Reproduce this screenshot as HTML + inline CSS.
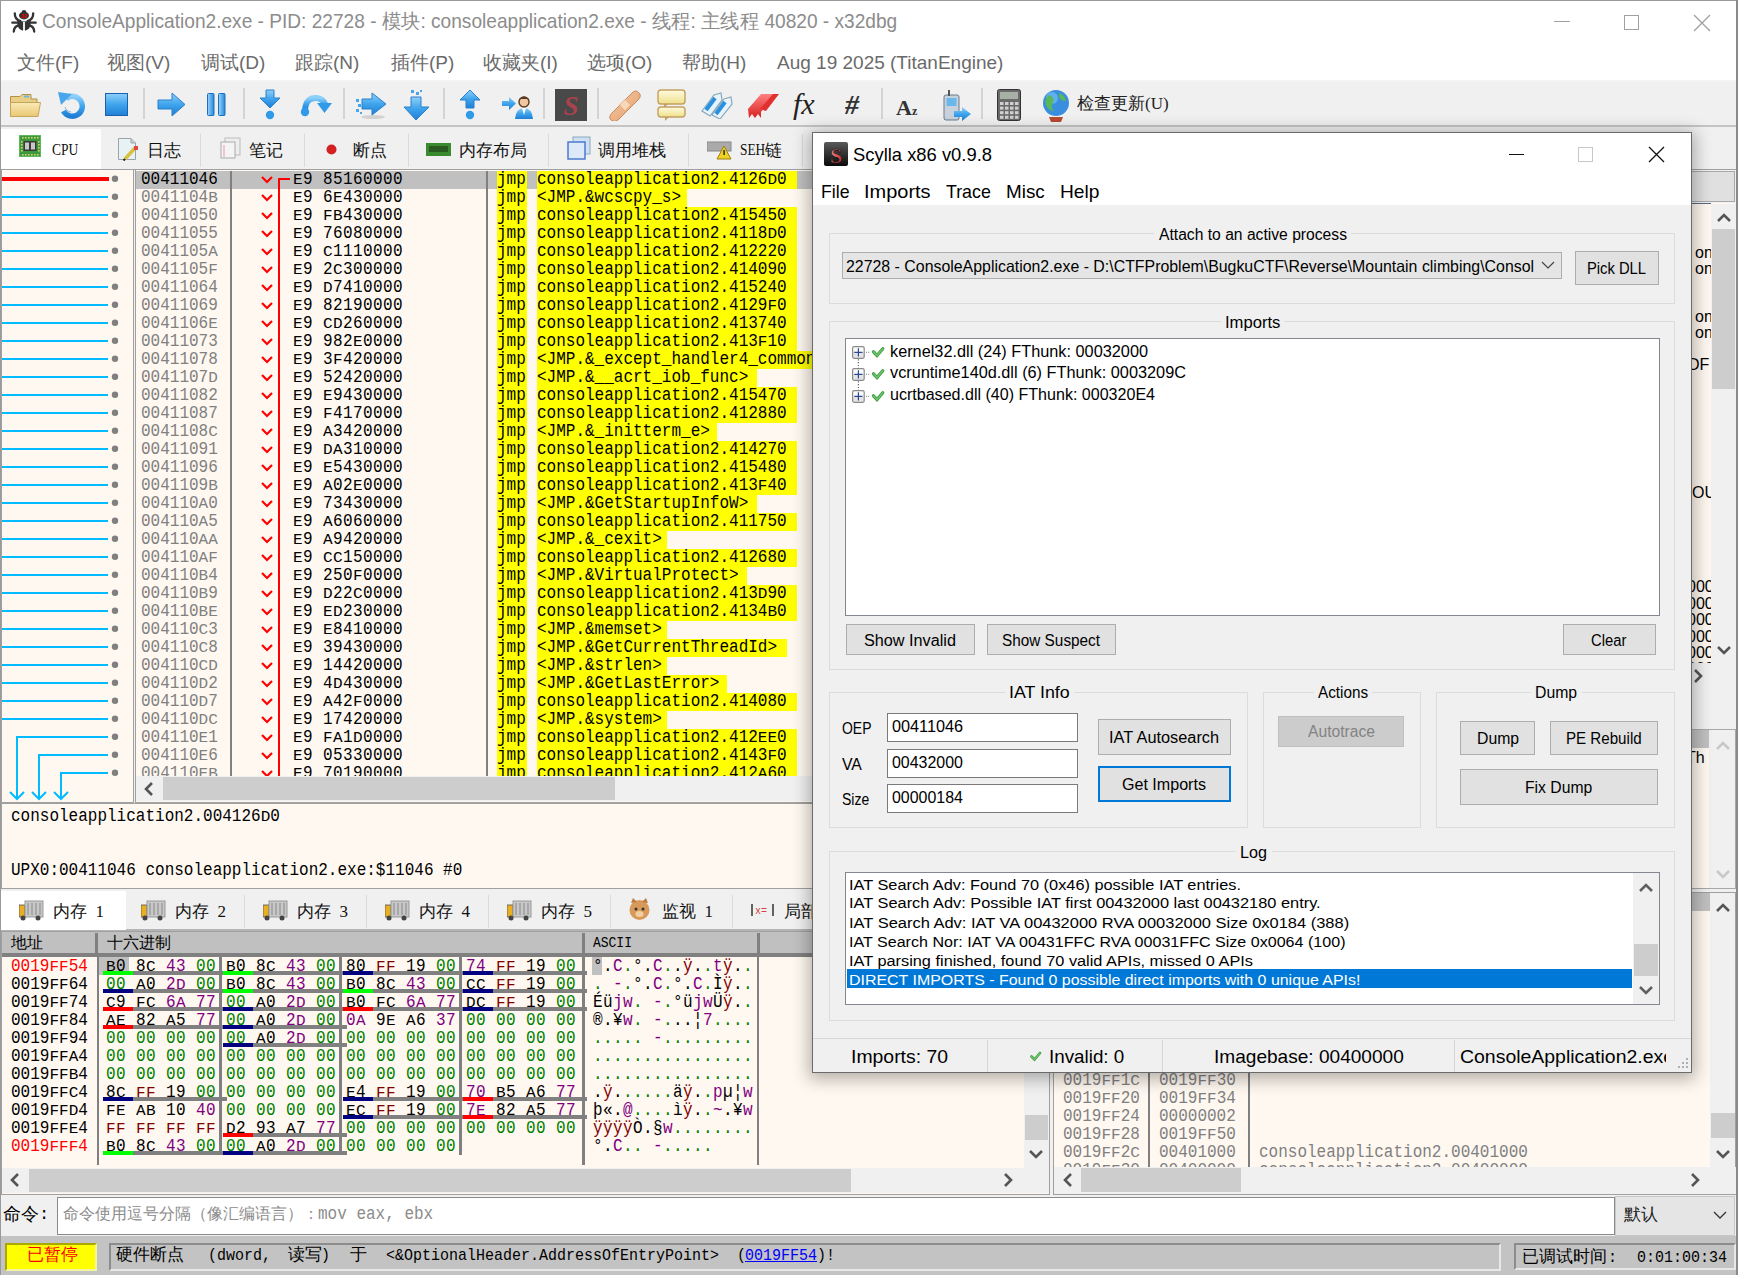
<!DOCTYPE html><html><head><meta charset="utf-8"><style>
html,body{margin:0;padding:0;}
body{width:1738px;height:1275px;overflow:hidden;position:relative;background:#f0f0f0;font-family:"Liberation Sans",sans-serif;}
div,span,svg{position:absolute;box-sizing:border-box;}
span{white-space:pre;line-height:1;}
.m{font-family:"Liberation Mono",monospace;font-size:18.5px;transform:scaleX(0.8649);transform-origin:0 0;}
i{font-style:normal;display:inline-block;position:static;transform:scaleY(.79);transform-origin:0 13px;}
.s{font-family:"Liberation Sans",sans-serif;}
.sf{font-family:"Liberation Serif",serif;}
</style></head><body>

<div style="left:0px;top:0px;width:1738px;height:82px;background:#fff;"></div>
<div style="left:0px;top:0px;width:1738px;height:1px;background:#9a9a9a;"></div>
<div style="left:0px;top:0px;width:1px;height:1275px;background:#9a9a9a;"></div>
<div style="left:1736px;top:0px;width:2px;height:1275px;background:#8a8a8a;"></div>
<svg style="left:8px;top:6px" width="32" height="30" viewBox="0 0 32 30"><g stroke="#333" stroke-width="2.3" fill="none" stroke-linecap="round"><path d="M6.8 7.3 Q6.6 13.5 12.5 15.2"/><path d="M25.2 7.3 Q25.4 13.5 19.5 15.2"/><path d="M4.3 16.7 H9.5"/><path d="M22.5 16.7 H27.7"/><path d="M9.8 19.6 Q6 21 5.8 25.5"/><path d="M22.2 19.6 Q26 21 26.2 25.5"/></g><path d="M9.4 14.2 Q16 16.6 22.6 14.2 L22.6 18 Q22.3 23.6 16 25 Q9.7 23.6 9.4 18 Z" fill="#333"/><rect x="15.1" y="16" width="1.8" height="9.5" fill="#fff"/><ellipse cx="16" cy="9.6" rx="5" ry="3.9" fill="#333"/><ellipse cx="16" cy="5.6" rx="2.3" ry="1.6" fill="#333"/><text x="16" y="11.8" font-family="Liberation Sans" font-weight="bold" font-size="5.6" fill="#e00" text-anchor="middle">32</text></svg>
<span style="left:41.5px;top:12px;font-size:19.8px;color:#8c8c8c;transform:scaleX(0.9657);transform-origin:0 0;">ConsoleApplication2.exe - PID: 22728 - 模块: consoleapplication2.exe - 线程: 主线程 40820 - x32dbg</span>
<div style="left:1554px;top:21px;width:16px;height:1px;background:#a0a0a0;"></div>
<div style="left:1624px;top:15px;width:15px;height:15px;border:1px solid #a0a0a0;"></div>
<svg style="left:1693px;top:14px" width="18" height="18" viewBox="0 0 18 18"><path d="M1 1L17 17M17 1L1 17" stroke="#a0a0a0" stroke-width="1.3"/></svg>
<span style="left:17px;top:53px;font-size:19px;color:#6a6a6a;">文件(F)</span>
<span style="left:107px;top:53px;font-size:19px;color:#6a6a6a;">视图(V)</span>
<span style="left:201px;top:53px;font-size:19px;color:#6a6a6a;">调试(D)</span>
<span style="left:295px;top:53px;font-size:19px;color:#6a6a6a;">跟踪(N)</span>
<span style="left:391px;top:53px;font-size:19px;color:#6a6a6a;">插件(P)</span>
<span style="left:483px;top:53px;font-size:19px;color:#6a6a6a;">收藏夹(I)</span>
<span style="left:587px;top:53px;font-size:19px;color:#6a6a6a;">选项(O)</span>
<span style="left:682px;top:53px;font-size:19px;color:#6a6a6a;">帮助(H)</span>
<span style="left:777px;top:53px;font-size:19px;color:#6a6a6a;">Aug 19 2025 (TitanEngine)</span>
<div style="left:1px;top:80px;width:1735px;height:2px;background:#f4f4f4;"></div>
<div style="left:1px;top:82px;width:1735px;height:45px;background:#f0f0f0;"></div>
<div style="left:1px;top:125px;width:1735px;height:2px;background:#c4c4c4;"></div>
<div style="left:143px;top:88px;width:2px;height:31px;background:#d4d4d4;"></div>
<div style="left:243px;top:88px;width:2px;height:31px;background:#d4d4d4;"></div>
<div style="left:343px;top:88px;width:2px;height:31px;background:#d4d4d4;"></div>
<div style="left:443px;top:88px;width:2px;height:31px;background:#d4d4d4;"></div>
<div style="left:543px;top:88px;width:2px;height:31px;background:#d4d4d4;"></div>
<div style="left:597px;top:88px;width:2px;height:31px;background:#d4d4d4;"></div>
<div style="left:881px;top:88px;width:2px;height:31px;background:#d4d4d4;"></div>
<div style="left:981px;top:88px;width:2px;height:31px;background:#d4d4d4;"></div>
<svg style="left:0;top:0" width="0" height="0"><defs><linearGradient id="gb" x1="0" y1="0" x2="0" y2="1"><stop offset="0" stop-color="#8fd0fa"/><stop offset="0.5" stop-color="#3fa4ec"/><stop offset="1" stop-color="#1f7fd6"/></linearGradient><linearGradient id="gbh" x1="0" y1="0" x2="1" y2="0"><stop offset="0" stop-color="#9ad6fb"/><stop offset="1" stop-color="#2686dc"/></linearGradient><linearGradient id="gf" x1="0" y1="0" x2="0" y2="1"><stop offset="0" stop-color="#fbeab8"/><stop offset="1" stop-color="#e8c873"/></linearGradient><linearGradient id="gbd" x1="0" y1="0" x2="1" y2="1"><stop offset="0" stop-color="#f6cfa8"/><stop offset="1" stop-color="#e29a68"/></linearGradient><linearGradient id="gc" x1="0" y1="0" x2="0" y2="1"><stop offset="0" stop-color="#fffbe0"/><stop offset="1" stop-color="#efe08a"/></linearGradient><linearGradient id="gr" x1="0" y1="0" x2="0" y2="1"><stop offset="0" stop-color="#ff8080"/><stop offset="1" stop-color="#d82020"/></linearGradient></defs></svg>
<svg style="left:9px;top:93px" width="33" height="25" viewBox="0 0 33 25"><path d="M1.5 3.5 H11 L13 1.5 H22 V6 H28 V23.5 H1.5 Z" fill="#e9cf86" stroke="#b49048" stroke-width="1"/><rect x="15" y="2.5" width="5" height="2" fill="#6ab8e8"/><path d="M1.5 9.5 H31.5 L29 23.5 H1.5 Z" fill="url(#gf)" stroke="#c6a458" stroke-width="1"/></svg>
<svg style="left:57px;top:91px" width="29" height="29" viewBox="0 0 29 29"><path d="M9 7.5 A10 10 0 1 1 6.5 20" fill="none" stroke="url(#gb)" stroke-width="5.5"/><path d="M8 16 A7 7 0 0 0 14 21" fill="none" stroke="#1f6fc0" stroke-width="1" opacity=".5"/><path d="M1 1 L15 3 L4 14 Z" fill="#4aa6ec"/></svg>
<svg style="left:105px;top:93px" width="23" height="23" viewBox="0 0 23 23"><rect x="0.5" y="0.5" width="22" height="22" fill="url(#gb)" stroke="#1a62b0"/></svg>
<svg style="left:157px;top:91px" width="29" height="27" viewBox="0 0 29 27"><path d="M1 9 H15 V2 L28 13.5 L15 25 V18 H1 Z" fill="url(#gb)" stroke="#2a80cc" stroke-width="1"/></svg>
<svg style="left:207px;top:93px" width="19" height="23" viewBox="0 0 19 23"><rect x="0.5" y="0.5" width="6.5" height="22" rx="1" fill="url(#gbh)" stroke="#1a6fc0"/><rect x="11.5" y="0.5" width="6.5" height="22" rx="1" fill="url(#gbh)" stroke="#1a6fc0"/></svg>
<svg style="left:259px;top:89px" width="23" height="32" viewBox="0 0 23 32"><path d="M7 1 H15 V9 H21 L11 19 L1 9 H7 Z" fill="url(#gb)" stroke="#2a80cc" stroke-width="1"/><circle cx="11" cy="26" r="4.2" fill="#2f9be8"/></svg>
<svg style="left:300px;top:91px" width="33" height="27" viewBox="0 0 33 27"><path d="M5 19 Q6 6 17 7 Q23 8 25 13" fill="none" stroke="url(#gb)" stroke-width="6"/><path d="M17 12 H32 L24.5 22 Z" fill="#2f9be8"/><circle cx="5" cy="21" r="4.2" fill="#2f9be8"/></svg>
<svg style="left:355px;top:91px" width="32" height="30" viewBox="0 0 32 30"><ellipse cx="18" cy="26" rx="12" ry="2" fill="#000" opacity=".12"/><path d="M7 8 H17 V2 L31 13 L17 24 V18 H7 Z" fill="url(#gb)" stroke="#2a80cc" stroke-width="1"/><rect x="1" y="8" width="3" height="3" fill="#4aa6ea"/><rect x="3" y="13" width="3" height="3" fill="#4aa6ea"/><rect x="1" y="18" width="3" height="3" fill="#4aa6ea"/><rect x="5" y="21" width="2" height="2" fill="#4aa6ea"/></svg>
<svg style="left:403px;top:89px" width="27" height="33" viewBox="0 0 27 33"><path d="M8 8 H18 V18 H26 L13 31 L1 18 H8 Z" fill="url(#gb)" stroke="#2a80cc" stroke-width="1"/><rect x="8" y="1" width="3" height="3" fill="#4aa6ea"/><rect x="13" y="3" width="3" height="3" fill="#4aa6ea"/><rect x="17" y="1" width="2" height="2" fill="#4aa6ea"/></svg>
<svg style="left:459px;top:89px" width="22" height="32" viewBox="0 0 22 32"><path d="M11 1 L21 11 H15 V19 H7 V11 H1 Z" fill="url(#gb)" stroke="#2a80cc" stroke-width="1"/><circle cx="11" cy="26" r="4.2" fill="#2f9be8"/></svg>
<svg style="left:501px;top:94px" width="33" height="26" viewBox="0 0 33 26"><path d="M1 7 H8 V3 L15 9.5 L8 16 V12 H1 Z" fill="url(#gb)"/><circle cx="23" cy="8" r="5" fill="#efc8a0" stroke="#5a3a20" stroke-width="1.4"/><path d="M18 5 Q23 0 28 5" fill="#5a3a20"/><path d="M14 25 Q15 14 23 14 Q31 14 32 25 Z" fill="url(#gb)"/><path d="M21 14 L23 21 L25 14" fill="#fff"/></svg>
<svg style="left:555px;top:89px" width="32" height="32" viewBox="0 0 32 32"><rect x="0" y="0" width="32" height="32" fill="#494949"/><text x="16" y="26" font-family="Liberation Serif" font-weight="bold" font-size="27" fill="#a8424c" text-anchor="middle" font-style="italic">S</text></svg>
<svg style="left:608px;top:89px" width="34" height="32" viewBox="0 0 34 32"><path d="M4 24 L24 4 Q28 0 31 4 Q34 7 30 11 L10 31 Q6 34 3 31 Q0 28 4 24 Z" fill="url(#gbd)" stroke="#c98a5a" stroke-width="1"/><rect x="13" y="12" width="8" height="8" transform="rotate(-45 17 16)" fill="#f8d8b8" stroke="#e0a070" stroke-width=".6"/></svg>
<svg style="left:657px;top:89px" width="29" height="32" viewBox="0 0 29 32"><rect x="1" y="1" width="27" height="14" rx="3" fill="url(#gc)" stroke="#c4a060" stroke-width="1.4"/><path d="M7 15 V19 L11 15" fill="#c4a060"/><rect x="1" y="18" width="27" height="10" rx="3" fill="url(#gc)" stroke="#c4a060" stroke-width="1.4"/><path d="M8 28 V32 L12 28" fill="#c4a060"/></svg>
<svg style="left:700px;top:91px" width="34" height="28" viewBox="0 0 34 28"><path d="M2 20 L14 4 L21 2 L22 9 L10 25 Z" fill="#e8f4fb" stroke="#88a8b8" stroke-width="1.2"/><path d="M6 19 L15 7" stroke="#2a90e0" stroke-width="4"/><path d="M12 24 L24 8 L31 6 L32 13 L20 28 Z" fill="#e8f4fb" stroke="#88a8b8" stroke-width="1.2"/><path d="M16 23 L25 11" stroke="#2a90e0" stroke-width="4"/></svg>
<svg style="left:747px;top:91px" width="33" height="28" viewBox="0 0 33 28"><path d="M1 18 L14 3 H21 L8 21 V27 L5 23 L2 27 Z" fill="url(#gr)"/><path d="M7 18 L20 3 H27 L14 21 V27 L11 23 L8 27 Z" fill="url(#gr)"/><path d="M13 18 L26 3 H32 L19 20 Z" fill="#e03030"/></svg>
<svg style="left:793px;top:89px" width="31" height="32" viewBox="0 0 31 32"><text x="0" y="25" font-family="Liberation Serif" font-style="italic" font-size="30" fill="#222">fx</text></svg>
<svg style="left:845px;top:91px" width="22" height="28" viewBox="0 0 22 28"><text x="0" y="23" font-family="Liberation Serif" font-style="italic" font-weight="bold" font-size="28" fill="#333">#</text></svg>
<svg style="left:896px;top:93px" width="28" height="26" viewBox="0 0 28 26"><text x="0" y="22" font-family="Liberation Serif" font-weight="bold" font-size="22" fill="#333">A</text><text x="16" y="22" font-family="Liberation Serif" font-weight="bold" font-size="12" fill="#333">z</text></svg>
<svg style="left:941px;top:89px" width="31" height="33" viewBox="0 0 31 33"><rect x="3" y="6" width="15" height="25" rx="2" fill="#c8d2dc" stroke="#6a7a8a"/><rect x="5.5" y="9" width="10" height="8" fill="#6ab8ea"/><rect x="7" y="1" width="2" height="6" fill="#555"/><path d="M13 22 H21 V18 L30 25 L21 32 V28 H13 Z" fill="url(#gb)"/></svg>
<svg style="left:997px;top:89px" width="24" height="32" viewBox="0 0 24 32"><rect x="0.5" y="0.5" width="23" height="31" rx="2" fill="#6a6a6a" stroke="#333"/><rect x="3" y="3" width="18" height="7" fill="#a8b0a8"/><rect x="3" y="13.0" width="3.5" height="3" fill="#d0d0d0"/><rect x="8" y="13.0" width="3.5" height="3" fill="#d0d0d0"/><rect x="13" y="13.0" width="3.5" height="3" fill="#d0d0d0"/><rect x="18" y="13.0" width="3.5" height="3" fill="#d0d0d0"/><rect x="3" y="17.6" width="3.5" height="3" fill="#d0d0d0"/><rect x="8" y="17.6" width="3.5" height="3" fill="#d0d0d0"/><rect x="13" y="17.6" width="3.5" height="3" fill="#d0d0d0"/><rect x="18" y="17.6" width="3.5" height="3" fill="#d0d0d0"/><rect x="3" y="22.2" width="3.5" height="3" fill="#d0d0d0"/><rect x="8" y="22.2" width="3.5" height="3" fill="#d0d0d0"/><rect x="13" y="22.2" width="3.5" height="3" fill="#d0d0d0"/><rect x="18" y="22.2" width="3.5" height="3" fill="#d0d0d0"/><rect x="3" y="26.799999999999997" width="3.5" height="3" fill="#d0d0d0"/><rect x="8" y="26.799999999999997" width="3.5" height="3" fill="#d0d0d0"/><rect x="13" y="26.799999999999997" width="3.5" height="3" fill="#d0d0d0"/><rect x="18" y="26.799999999999997" width="3.5" height="3" fill="#d0d0d0"/></svg>
<svg style="left:1041px;top:89px" width="30" height="34" viewBox="0 0 30 34"><circle cx="15" cy="14" r="13" fill="#3a8ee0"/><circle cx="11" cy="9" r="6" fill="#8ad0ff" opacity=".5"/><path d="M8 6 Q14 8 12 14 Q9 18 13 22 Q8 22 5 16 Q3 10 8 6Z" fill="#58b858"/><path d="M18 4 Q24 6 25 12 Q20 12 18 8Z" fill="#58b858"/><path d="M8 28 H22 L20 33 H10 Z" fill="#b84a30"/></svg>
<span style="left:1077px;top:95px;font-size:17px;color:#222;font-family:'Liberation Serif',serif;">检查更新(U)</span>
<div style="left:1px;top:127px;width:1735px;height:43px;background:#f0f0f0;"></div>
<div style="left:1px;top:169px;width:1735px;height:1px;background:#a0a0a0;"></div>
<div style="left:1px;top:129px;width:100px;height:40px;background:#fff;"></div>
<div style="left:200px;top:134px;width:1px;height:33px;background:#dadada;"></div>
<div style="left:304px;top:134px;width:1px;height:33px;background:#dadada;"></div>
<div style="left:408px;top:134px;width:1px;height:33px;background:#dadada;"></div>
<div style="left:548px;top:134px;width:1px;height:33px;background:#dadada;"></div>
<div style="left:688px;top:134px;width:1px;height:33px;background:#dadada;"></div>
<div style="left:802px;top:134px;width:1px;height:33px;background:#dadada;"></div>
<span style="left:147px;top:142px;font-size:17px;color:#111;">日志</span>
<span style="left:249px;top:142px;font-size:17px;color:#111;">笔记</span>
<span style="left:353px;top:142px;font-size:17px;color:#111;">断点</span>
<span style="left:459px;top:142px;font-size:17px;color:#111;">内存布局</span>
<span style="left:598px;top:142px;font-size:17px;color:#111;">调用堆栈</span>
<span style="left:765px;top:142px;font-size:17px;color:#111;">链</span>
<span style="left:51.50px;top:141px;font-family:'Liberation Serif',serif;font-size:17px;color:#111;transform:scaleX(0.7940);transform-origin:0 0;">CPU</span>
<span style="left:740.00px;top:141px;font-family:'Liberation Serif',serif;font-size:17px;color:#111;transform:scaleX(0.7844);transform-origin:0 0;">SEH</span>
<svg style="left:19px;top:135px" width="23" height="23" viewBox="0 0 23 23"><rect x="0" y="0" width="22" height="22" fill="#3c9a3c"/><rect x="0.5" y="0.5" width="21" height="21" fill="none" stroke="#5cb85c"/><rect x="3" y="2" width="1.6" height="1.6" fill="#d8d070"/><rect x="3" y="19" width="1.6" height="1.6" fill="#d8d070"/><rect x="6" y="2" width="1.6" height="1.6" fill="#d8d070"/><rect x="6" y="19" width="1.6" height="1.6" fill="#d8d070"/><rect x="9" y="2" width="1.6" height="1.6" fill="#d8d070"/><rect x="9" y="19" width="1.6" height="1.6" fill="#d8d070"/><rect x="12" y="2" width="1.6" height="1.6" fill="#d8d070"/><rect x="12" y="19" width="1.6" height="1.6" fill="#d8d070"/><rect x="15" y="2" width="1.6" height="1.6" fill="#d8d070"/><rect x="15" y="19" width="1.6" height="1.6" fill="#d8d070"/><rect x="18" y="2" width="1.6" height="1.6" fill="#d8d070"/><rect x="18" y="19" width="1.6" height="1.6" fill="#d8d070"/><rect x="2" y="6" width="1.6" height="1.6" fill="#d8d070"/><rect x="19" y="6" width="1.6" height="1.6" fill="#d8d070"/><rect x="2" y="9" width="1.6" height="1.6" fill="#d8d070"/><rect x="19" y="9" width="1.6" height="1.6" fill="#d8d070"/><rect x="2" y="12" width="1.6" height="1.6" fill="#d8d070"/><rect x="19" y="12" width="1.6" height="1.6" fill="#d8d070"/><rect x="2" y="15" width="1.6" height="1.6" fill="#d8d070"/><rect x="19" y="15" width="1.6" height="1.6" fill="#d8d070"/><rect x="4.5" y="6" width="13" height="10" fill="#3a3a3a"/><rect x="6" y="7.5" width="4" height="7" fill="#c8c8c8"/><rect x="12" y="7.5" width="4" height="7" fill="#c8c8c8"/></svg>
<svg style="left:117px;top:137px" width="22" height="24" viewBox="0 0 22 24"><path d="M1.5 1.5 H14 L18.5 6 V22.5 H1.5 Z" fill="#e8f2f4" stroke="#9aa4a8"/><path d="M14 1.5 V6 H18.5" fill="#c8d0d4" stroke="#9aa4a8"/><path d="M8 22 L18 11" stroke="#d8c040" stroke-width="3.5"/><path d="M8 22 L6.5 23.5" stroke="#222" stroke-width="2"/><rect x="17" y="9" width="4" height="4" fill="#e04848"/></svg>
<svg style="left:219px;top:137px" width="23" height="22" viewBox="0 0 23 22"><rect x="6" y="1" width="15" height="17" fill="#eee" stroke="#bbb"/><rect x="2" y="5" width="14" height="16" fill="#f4f4f4" stroke="#aaa"/><path d="M5 8 V20" stroke="#e9a" stroke-width="1"/></svg>
<svg style="left:326px;top:144px" width="11" height="11" viewBox="0 0 11 11"><circle cx="5.5" cy="5.5" r="5" fill="#d42020"/></svg>
<svg style="left:426px;top:143px" width="25" height="13" viewBox="0 0 25 13"><rect x="0" y="0" width="25" height="13" fill="#3a8a30"/><rect x="3" y="3" width="19" height="6" fill="#2a5a20"/></svg>
<svg style="left:567px;top:136px" width="24" height="24" viewBox="0 0 24 24"><rect x="6" y="1" width="17" height="17" fill="#cfe0f4" stroke="#8ab"/><rect x="1" y="6" width="17" height="17" fill="#dde9f8" stroke="#4a7ad0" stroke-width="1.5"/></svg>
<svg style="left:707px;top:138px" width="25" height="22" viewBox="0 0 25 22"><rect x="0" y="4" width="24" height="9" fill="#aaa" stroke="#888"/><path d="M17 8 L24 21 H10 Z" fill="#f0d020" stroke="#a08010"/><rect x="16.3" y="12" width="1.6" height="5" fill="#333"/></svg>
<div style="left:1px;top:169px;width:133px;height:634px;background:#FFF8F0;border:1px solid #a0a0a0;"></div>
<div style="left:135px;top:169px;width:1601px;height:634px;background:#FFF8F0;border:1px solid #a0a0a0;border-right:none;"></div>
<div style="left:136px;top:171px;width:1560px;height:18px;background:#c0c0c0;"></div>
<div style="left:230px;top:171px;width:2px;height:605px;background:#808080;"></div>
<div style="left:486px;top:171px;width:2px;height:605px;background:#808080;"></div>
<span class="m" style="left:141px;top:171px;color:#000;">00411046</span>
<span class="m" style="left:293px;top:171px;color:#000;letter-spacing:0.46px;"><i>E</i>9</span>
<span class="m" style="left:323px;top:171px;color:#000;letter-spacing:0.46px;">85160000</span>
<div style="left:497px;top:171px;width:30px;height:18px;background:#ffff00;"></div>
<div style="left:537px;top:171px;width:260px;height:18px;background:#ffff00;"></div>
<span class="m" style="left:497px;top:171px;color:#000;">jmp</span>
<span class="m" style="left:537px;top:171px;color:#000;">consoleapplication2.4126<i>D</i>0</span>
<span class="m" style="left:141px;top:189px;color:#808080;">0041104<i>B</i></span>
<span class="m" style="left:293px;top:189px;color:#000;letter-spacing:0.46px;"><i>E</i>9</span>
<span class="m" style="left:323px;top:189px;color:#000;letter-spacing:0.46px;">6<i>E</i>430000</span>
<div style="left:497px;top:189px;width:30px;height:18px;background:#ffff00;"></div>
<div style="left:537px;top:189px;width:150px;height:18px;background:#ffff00;"></div>
<span class="m" style="left:497px;top:189px;color:#000;">jmp</span>
<span class="m" style="left:537px;top:189px;color:#000;">&lt;JMP.&amp;wcscpy_s&gt;</span>
<span class="m" style="left:141px;top:207px;color:#808080;">00411050</span>
<span class="m" style="left:293px;top:207px;color:#000;letter-spacing:0.46px;"><i>E</i>9</span>
<span class="m" style="left:323px;top:207px;color:#000;letter-spacing:0.46px;"><i>F</i><i>B</i>430000</span>
<div style="left:497px;top:207px;width:30px;height:18px;background:#ffff00;"></div>
<div style="left:537px;top:207px;width:260px;height:18px;background:#ffff00;"></div>
<span class="m" style="left:497px;top:207px;color:#000;">jmp</span>
<span class="m" style="left:537px;top:207px;color:#000;">consoleapplication2.415450</span>
<span class="m" style="left:141px;top:225px;color:#808080;">00411055</span>
<span class="m" style="left:293px;top:225px;color:#000;letter-spacing:0.46px;"><i>E</i>9</span>
<span class="m" style="left:323px;top:225px;color:#000;letter-spacing:0.46px;">76080000</span>
<div style="left:497px;top:225px;width:30px;height:18px;background:#ffff00;"></div>
<div style="left:537px;top:225px;width:260px;height:18px;background:#ffff00;"></div>
<span class="m" style="left:497px;top:225px;color:#000;">jmp</span>
<span class="m" style="left:537px;top:225px;color:#000;">consoleapplication2.4118<i>D</i>0</span>
<span class="m" style="left:141px;top:243px;color:#808080;">0041105<i>A</i></span>
<span class="m" style="left:293px;top:243px;color:#000;letter-spacing:0.46px;"><i>E</i>9</span>
<span class="m" style="left:323px;top:243px;color:#000;letter-spacing:0.46px;"><i>C</i>1110000</span>
<div style="left:497px;top:243px;width:30px;height:18px;background:#ffff00;"></div>
<div style="left:537px;top:243px;width:260px;height:18px;background:#ffff00;"></div>
<span class="m" style="left:497px;top:243px;color:#000;">jmp</span>
<span class="m" style="left:537px;top:243px;color:#000;">consoleapplication2.412220</span>
<span class="m" style="left:141px;top:261px;color:#808080;">0041105<i>F</i></span>
<span class="m" style="left:293px;top:261px;color:#000;letter-spacing:0.46px;"><i>E</i>9</span>
<span class="m" style="left:323px;top:261px;color:#000;letter-spacing:0.46px;">2<i>C</i>300000</span>
<div style="left:497px;top:261px;width:30px;height:18px;background:#ffff00;"></div>
<div style="left:537px;top:261px;width:260px;height:18px;background:#ffff00;"></div>
<span class="m" style="left:497px;top:261px;color:#000;">jmp</span>
<span class="m" style="left:537px;top:261px;color:#000;">consoleapplication2.414090</span>
<span class="m" style="left:141px;top:279px;color:#808080;">00411064</span>
<span class="m" style="left:293px;top:279px;color:#000;letter-spacing:0.46px;"><i>E</i>9</span>
<span class="m" style="left:323px;top:279px;color:#000;letter-spacing:0.46px;"><i>D</i>7410000</span>
<div style="left:497px;top:279px;width:30px;height:18px;background:#ffff00;"></div>
<div style="left:537px;top:279px;width:260px;height:18px;background:#ffff00;"></div>
<span class="m" style="left:497px;top:279px;color:#000;">jmp</span>
<span class="m" style="left:537px;top:279px;color:#000;">consoleapplication2.415240</span>
<span class="m" style="left:141px;top:297px;color:#808080;">00411069</span>
<span class="m" style="left:293px;top:297px;color:#000;letter-spacing:0.46px;"><i>E</i>9</span>
<span class="m" style="left:323px;top:297px;color:#000;letter-spacing:0.46px;">82190000</span>
<div style="left:497px;top:297px;width:30px;height:18px;background:#ffff00;"></div>
<div style="left:537px;top:297px;width:260px;height:18px;background:#ffff00;"></div>
<span class="m" style="left:497px;top:297px;color:#000;">jmp</span>
<span class="m" style="left:537px;top:297px;color:#000;">consoleapplication2.4129<i>F</i>0</span>
<span class="m" style="left:141px;top:315px;color:#808080;">0041106<i>E</i></span>
<span class="m" style="left:293px;top:315px;color:#000;letter-spacing:0.46px;"><i>E</i>9</span>
<span class="m" style="left:323px;top:315px;color:#000;letter-spacing:0.46px;"><i>C</i><i>D</i>260000</span>
<div style="left:497px;top:315px;width:30px;height:18px;background:#ffff00;"></div>
<div style="left:537px;top:315px;width:260px;height:18px;background:#ffff00;"></div>
<span class="m" style="left:497px;top:315px;color:#000;">jmp</span>
<span class="m" style="left:537px;top:315px;color:#000;">consoleapplication2.413740</span>
<span class="m" style="left:141px;top:333px;color:#808080;">00411073</span>
<span class="m" style="left:293px;top:333px;color:#000;letter-spacing:0.46px;"><i>E</i>9</span>
<span class="m" style="left:323px;top:333px;color:#000;letter-spacing:0.46px;">982<i>E</i>0000</span>
<div style="left:497px;top:333px;width:30px;height:18px;background:#ffff00;"></div>
<div style="left:537px;top:333px;width:260px;height:18px;background:#ffff00;"></div>
<span class="m" style="left:497px;top:333px;color:#000;">jmp</span>
<span class="m" style="left:537px;top:333px;color:#000;">consoleapplication2.413<i>F</i>10</span>
<span class="m" style="left:141px;top:351px;color:#808080;">00411078</span>
<span class="m" style="left:293px;top:351px;color:#000;letter-spacing:0.46px;"><i>E</i>9</span>
<span class="m" style="left:323px;top:351px;color:#000;letter-spacing:0.46px;">3<i>F</i>420000</span>
<div style="left:497px;top:351px;width:30px;height:18px;background:#ffff00;"></div>
<div style="left:537px;top:351px;width:300px;height:18px;background:#ffff00;"></div>
<span class="m" style="left:497px;top:351px;color:#000;">jmp</span>
<span class="m" style="left:537px;top:351px;color:#000;">&lt;JMP.&amp;_except_handler4_common&gt;</span>
<span class="m" style="left:141px;top:369px;color:#808080;">0041107<i>D</i></span>
<span class="m" style="left:293px;top:369px;color:#000;letter-spacing:0.46px;"><i>E</i>9</span>
<span class="m" style="left:323px;top:369px;color:#000;letter-spacing:0.46px;">52420000</span>
<div style="left:497px;top:369px;width:30px;height:18px;background:#ffff00;"></div>
<div style="left:537px;top:369px;width:220px;height:18px;background:#ffff00;"></div>
<span class="m" style="left:497px;top:369px;color:#000;">jmp</span>
<span class="m" style="left:537px;top:369px;color:#000;">&lt;JMP.&amp;__acrt_iob_func&gt;</span>
<span class="m" style="left:141px;top:387px;color:#808080;">00411082</span>
<span class="m" style="left:293px;top:387px;color:#000;letter-spacing:0.46px;"><i>E</i>9</span>
<span class="m" style="left:323px;top:387px;color:#000;letter-spacing:0.46px;"><i>E</i>9430000</span>
<div style="left:497px;top:387px;width:30px;height:18px;background:#ffff00;"></div>
<div style="left:537px;top:387px;width:260px;height:18px;background:#ffff00;"></div>
<span class="m" style="left:497px;top:387px;color:#000;">jmp</span>
<span class="m" style="left:537px;top:387px;color:#000;">consoleapplication2.415470</span>
<span class="m" style="left:141px;top:405px;color:#808080;">00411087</span>
<span class="m" style="left:293px;top:405px;color:#000;letter-spacing:0.46px;"><i>E</i>9</span>
<span class="m" style="left:323px;top:405px;color:#000;letter-spacing:0.46px;"><i>F</i>4170000</span>
<div style="left:497px;top:405px;width:30px;height:18px;background:#ffff00;"></div>
<div style="left:537px;top:405px;width:260px;height:18px;background:#ffff00;"></div>
<span class="m" style="left:497px;top:405px;color:#000;">jmp</span>
<span class="m" style="left:537px;top:405px;color:#000;">consoleapplication2.412880</span>
<span class="m" style="left:141px;top:423px;color:#808080;">0041108<i>C</i></span>
<span class="m" style="left:293px;top:423px;color:#000;letter-spacing:0.46px;"><i>E</i>9</span>
<span class="m" style="left:323px;top:423px;color:#000;letter-spacing:0.46px;"><i>A</i>3420000</span>
<div style="left:497px;top:423px;width:30px;height:18px;background:#ffff00;"></div>
<div style="left:537px;top:423px;width:180px;height:18px;background:#ffff00;"></div>
<span class="m" style="left:497px;top:423px;color:#000;">jmp</span>
<span class="m" style="left:537px;top:423px;color:#000;">&lt;JMP.&amp;_initterm_e&gt;</span>
<span class="m" style="left:141px;top:441px;color:#808080;">00411091</span>
<span class="m" style="left:293px;top:441px;color:#000;letter-spacing:0.46px;"><i>E</i>9</span>
<span class="m" style="left:323px;top:441px;color:#000;letter-spacing:0.46px;"><i>D</i><i>A</i>310000</span>
<div style="left:497px;top:441px;width:30px;height:18px;background:#ffff00;"></div>
<div style="left:537px;top:441px;width:260px;height:18px;background:#ffff00;"></div>
<span class="m" style="left:497px;top:441px;color:#000;">jmp</span>
<span class="m" style="left:537px;top:441px;color:#000;">consoleapplication2.414270</span>
<span class="m" style="left:141px;top:459px;color:#808080;">00411096</span>
<span class="m" style="left:293px;top:459px;color:#000;letter-spacing:0.46px;"><i>E</i>9</span>
<span class="m" style="left:323px;top:459px;color:#000;letter-spacing:0.46px;"><i>E</i>5430000</span>
<div style="left:497px;top:459px;width:30px;height:18px;background:#ffff00;"></div>
<div style="left:537px;top:459px;width:260px;height:18px;background:#ffff00;"></div>
<span class="m" style="left:497px;top:459px;color:#000;">jmp</span>
<span class="m" style="left:537px;top:459px;color:#000;">consoleapplication2.415480</span>
<span class="m" style="left:141px;top:477px;color:#808080;">0041109<i>B</i></span>
<span class="m" style="left:293px;top:477px;color:#000;letter-spacing:0.46px;"><i>E</i>9</span>
<span class="m" style="left:323px;top:477px;color:#000;letter-spacing:0.46px;"><i>A</i>02<i>E</i>0000</span>
<div style="left:497px;top:477px;width:30px;height:18px;background:#ffff00;"></div>
<div style="left:537px;top:477px;width:260px;height:18px;background:#ffff00;"></div>
<span class="m" style="left:497px;top:477px;color:#000;">jmp</span>
<span class="m" style="left:537px;top:477px;color:#000;">consoleapplication2.413<i>F</i>40</span>
<span class="m" style="left:141px;top:495px;color:#808080;">004110<i>A</i>0</span>
<span class="m" style="left:293px;top:495px;color:#000;letter-spacing:0.46px;"><i>E</i>9</span>
<span class="m" style="left:323px;top:495px;color:#000;letter-spacing:0.46px;">73430000</span>
<div style="left:497px;top:495px;width:30px;height:18px;background:#ffff00;"></div>
<div style="left:537px;top:495px;width:220px;height:18px;background:#ffff00;"></div>
<span class="m" style="left:497px;top:495px;color:#000;">jmp</span>
<span class="m" style="left:537px;top:495px;color:#000;">&lt;JMP.&amp;GetStartupInfoW&gt;</span>
<span class="m" style="left:141px;top:513px;color:#808080;">004110<i>A</i>5</span>
<span class="m" style="left:293px;top:513px;color:#000;letter-spacing:0.46px;"><i>E</i>9</span>
<span class="m" style="left:323px;top:513px;color:#000;letter-spacing:0.46px;"><i>A</i>6060000</span>
<div style="left:497px;top:513px;width:30px;height:18px;background:#ffff00;"></div>
<div style="left:537px;top:513px;width:260px;height:18px;background:#ffff00;"></div>
<span class="m" style="left:497px;top:513px;color:#000;">jmp</span>
<span class="m" style="left:537px;top:513px;color:#000;">consoleapplication2.411750</span>
<span class="m" style="left:141px;top:531px;color:#808080;">004110<i>A</i><i>A</i></span>
<span class="m" style="left:293px;top:531px;color:#000;letter-spacing:0.46px;"><i>E</i>9</span>
<span class="m" style="left:323px;top:531px;color:#000;letter-spacing:0.46px;"><i>A</i>9420000</span>
<div style="left:497px;top:531px;width:30px;height:18px;background:#ffff00;"></div>
<div style="left:537px;top:531px;width:130px;height:18px;background:#ffff00;"></div>
<span class="m" style="left:497px;top:531px;color:#000;">jmp</span>
<span class="m" style="left:537px;top:531px;color:#000;">&lt;JMP.&amp;_cexit&gt;</span>
<span class="m" style="left:141px;top:549px;color:#808080;">004110<i>A</i><i>F</i></span>
<span class="m" style="left:293px;top:549px;color:#000;letter-spacing:0.46px;"><i>E</i>9</span>
<span class="m" style="left:323px;top:549px;color:#000;letter-spacing:0.46px;"><i>C</i><i>C</i>150000</span>
<div style="left:497px;top:549px;width:30px;height:18px;background:#ffff00;"></div>
<div style="left:537px;top:549px;width:260px;height:18px;background:#ffff00;"></div>
<span class="m" style="left:497px;top:549px;color:#000;">jmp</span>
<span class="m" style="left:537px;top:549px;color:#000;">consoleapplication2.412680</span>
<span class="m" style="left:141px;top:567px;color:#808080;">004110<i>B</i>4</span>
<span class="m" style="left:293px;top:567px;color:#000;letter-spacing:0.46px;"><i>E</i>9</span>
<span class="m" style="left:323px;top:567px;color:#000;letter-spacing:0.46px;">250<i>F</i>0000</span>
<div style="left:497px;top:567px;width:30px;height:18px;background:#ffff00;"></div>
<div style="left:537px;top:567px;width:210px;height:18px;background:#ffff00;"></div>
<span class="m" style="left:497px;top:567px;color:#000;">jmp</span>
<span class="m" style="left:537px;top:567px;color:#000;">&lt;JMP.&amp;VirtualProtect&gt;</span>
<span class="m" style="left:141px;top:585px;color:#808080;">004110<i>B</i>9</span>
<span class="m" style="left:293px;top:585px;color:#000;letter-spacing:0.46px;"><i>E</i>9</span>
<span class="m" style="left:323px;top:585px;color:#000;letter-spacing:0.46px;"><i>D</i>22<i>C</i>0000</span>
<div style="left:497px;top:585px;width:30px;height:18px;background:#ffff00;"></div>
<div style="left:537px;top:585px;width:260px;height:18px;background:#ffff00;"></div>
<span class="m" style="left:497px;top:585px;color:#000;">jmp</span>
<span class="m" style="left:537px;top:585px;color:#000;">consoleapplication2.413<i>D</i>90</span>
<span class="m" style="left:141px;top:603px;color:#808080;">004110<i>B</i><i>E</i></span>
<span class="m" style="left:293px;top:603px;color:#000;letter-spacing:0.46px;"><i>E</i>9</span>
<span class="m" style="left:323px;top:603px;color:#000;letter-spacing:0.46px;"><i>E</i><i>D</i>230000</span>
<div style="left:497px;top:603px;width:30px;height:18px;background:#ffff00;"></div>
<div style="left:537px;top:603px;width:260px;height:18px;background:#ffff00;"></div>
<span class="m" style="left:497px;top:603px;color:#000;">jmp</span>
<span class="m" style="left:537px;top:603px;color:#000;">consoleapplication2.4134<i>B</i>0</span>
<span class="m" style="left:141px;top:621px;color:#808080;">004110<i>C</i>3</span>
<span class="m" style="left:293px;top:621px;color:#000;letter-spacing:0.46px;"><i>E</i>9</span>
<span class="m" style="left:323px;top:621px;color:#000;letter-spacing:0.46px;"><i>E</i>8410000</span>
<div style="left:497px;top:621px;width:30px;height:18px;background:#ffff00;"></div>
<div style="left:537px;top:621px;width:130px;height:18px;background:#ffff00;"></div>
<span class="m" style="left:497px;top:621px;color:#000;">jmp</span>
<span class="m" style="left:537px;top:621px;color:#000;">&lt;JMP.&amp;memset&gt;</span>
<span class="m" style="left:141px;top:639px;color:#808080;">004110<i>C</i>8</span>
<span class="m" style="left:293px;top:639px;color:#000;letter-spacing:0.46px;"><i>E</i>9</span>
<span class="m" style="left:323px;top:639px;color:#000;letter-spacing:0.46px;">39430000</span>
<div style="left:497px;top:639px;width:30px;height:18px;background:#ffff00;"></div>
<div style="left:537px;top:639px;width:250px;height:18px;background:#ffff00;"></div>
<span class="m" style="left:497px;top:639px;color:#000;">jmp</span>
<span class="m" style="left:537px;top:639px;color:#000;">&lt;JMP.&amp;GetCurrentThreadId&gt;</span>
<span class="m" style="left:141px;top:657px;color:#808080;">004110<i>C</i><i>D</i></span>
<span class="m" style="left:293px;top:657px;color:#000;letter-spacing:0.46px;"><i>E</i>9</span>
<span class="m" style="left:323px;top:657px;color:#000;letter-spacing:0.46px;">14420000</span>
<div style="left:497px;top:657px;width:30px;height:18px;background:#ffff00;"></div>
<div style="left:537px;top:657px;width:130px;height:18px;background:#ffff00;"></div>
<span class="m" style="left:497px;top:657px;color:#000;">jmp</span>
<span class="m" style="left:537px;top:657px;color:#000;">&lt;JMP.&amp;strlen&gt;</span>
<span class="m" style="left:141px;top:675px;color:#808080;">004110<i>D</i>2</span>
<span class="m" style="left:293px;top:675px;color:#000;letter-spacing:0.46px;"><i>E</i>9</span>
<span class="m" style="left:323px;top:675px;color:#000;letter-spacing:0.46px;">4<i>D</i>430000</span>
<div style="left:497px;top:675px;width:30px;height:18px;background:#ffff00;"></div>
<div style="left:537px;top:675px;width:190px;height:18px;background:#ffff00;"></div>
<span class="m" style="left:497px;top:675px;color:#000;">jmp</span>
<span class="m" style="left:537px;top:675px;color:#000;">&lt;JMP.&amp;GetLastError&gt;</span>
<span class="m" style="left:141px;top:693px;color:#808080;">004110<i>D</i>7</span>
<span class="m" style="left:293px;top:693px;color:#000;letter-spacing:0.46px;"><i>E</i>9</span>
<span class="m" style="left:323px;top:693px;color:#000;letter-spacing:0.46px;"><i>A</i>42<i>F</i>0000</span>
<div style="left:497px;top:693px;width:30px;height:18px;background:#ffff00;"></div>
<div style="left:537px;top:693px;width:260px;height:18px;background:#ffff00;"></div>
<span class="m" style="left:497px;top:693px;color:#000;">jmp</span>
<span class="m" style="left:537px;top:693px;color:#000;">consoleapplication2.414080</span>
<span class="m" style="left:141px;top:711px;color:#808080;">004110<i>D</i><i>C</i></span>
<span class="m" style="left:293px;top:711px;color:#000;letter-spacing:0.46px;"><i>E</i>9</span>
<span class="m" style="left:323px;top:711px;color:#000;letter-spacing:0.46px;">17420000</span>
<div style="left:497px;top:711px;width:30px;height:18px;background:#ffff00;"></div>
<div style="left:537px;top:711px;width:130px;height:18px;background:#ffff00;"></div>
<span class="m" style="left:497px;top:711px;color:#000;">jmp</span>
<span class="m" style="left:537px;top:711px;color:#000;">&lt;JMP.&amp;system&gt;</span>
<span class="m" style="left:141px;top:729px;color:#808080;">004110<i>E</i>1</span>
<span class="m" style="left:293px;top:729px;color:#000;letter-spacing:0.46px;"><i>E</i>9</span>
<span class="m" style="left:323px;top:729px;color:#000;letter-spacing:0.46px;"><i>F</i><i>A</i>1<i>D</i>0000</span>
<div style="left:497px;top:729px;width:30px;height:18px;background:#ffff00;"></div>
<div style="left:537px;top:729px;width:260px;height:18px;background:#ffff00;"></div>
<span class="m" style="left:497px;top:729px;color:#000;">jmp</span>
<span class="m" style="left:537px;top:729px;color:#000;">consoleapplication2.412<i>E</i><i>E</i>0</span>
<span class="m" style="left:141px;top:747px;color:#808080;">004110<i>E</i>6</span>
<span class="m" style="left:293px;top:747px;color:#000;letter-spacing:0.46px;"><i>E</i>9</span>
<span class="m" style="left:323px;top:747px;color:#000;letter-spacing:0.46px;">05330000</span>
<div style="left:497px;top:747px;width:30px;height:18px;background:#ffff00;"></div>
<div style="left:537px;top:747px;width:260px;height:18px;background:#ffff00;"></div>
<span class="m" style="left:497px;top:747px;color:#000;">jmp</span>
<span class="m" style="left:537px;top:747px;color:#000;">consoleapplication2.4143<i>F</i>0</span>
<span class="m" style="left:141px;top:765px;color:#808080;">004110<i>E</i><i>B</i></span>
<span class="m" style="left:293px;top:765px;color:#000;letter-spacing:0.46px;"><i>E</i>9</span>
<span class="m" style="left:323px;top:765px;color:#000;letter-spacing:0.46px;">70190000</span>
<div style="left:497px;top:765px;width:30px;height:18px;background:#ffff00;"></div>
<div style="left:537px;top:765px;width:260px;height:18px;background:#ffff00;"></div>
<span class="m" style="left:497px;top:765px;color:#000;">jmp</span>
<span class="m" style="left:537px;top:765px;color:#000;">consoleapplication2.412<i>A</i>60</span>
<div style="left:136px;top:776px;width:1560px;height:25px;background:#f0f0f0;"></div>
<div style="left:163px;top:777px;width:452px;height:23px;background:#cdcdcd;"></div>
<svg style="left:143px;top:781px" width="12" height="16" viewBox="0 0 12 16"><path d="M9 2 L3 8 L9 14" stroke="#555" stroke-width="2.6" fill="none"/></svg>
<svg style="left:0px;top:171px" width="134" height="631" viewBox="0 0 134 631"><circle cx="115" cy="7.7" r="3.2" fill="#808080"/><circle cx="115" cy="25.7" r="3.2" fill="#808080"/><circle cx="115" cy="43.7" r="3.2" fill="#808080"/><circle cx="115" cy="61.7" r="3.2" fill="#808080"/><circle cx="115" cy="79.7" r="3.2" fill="#808080"/><circle cx="115" cy="97.7" r="3.2" fill="#808080"/><circle cx="115" cy="115.7" r="3.2" fill="#808080"/><circle cx="115" cy="133.7" r="3.2" fill="#808080"/><circle cx="115" cy="151.7" r="3.2" fill="#808080"/><circle cx="115" cy="169.7" r="3.2" fill="#808080"/><circle cx="115" cy="187.7" r="3.2" fill="#808080"/><circle cx="115" cy="205.7" r="3.2" fill="#808080"/><circle cx="115" cy="223.7" r="3.2" fill="#808080"/><circle cx="115" cy="241.7" r="3.2" fill="#808080"/><circle cx="115" cy="259.7" r="3.2" fill="#808080"/><circle cx="115" cy="277.7" r="3.2" fill="#808080"/><circle cx="115" cy="295.7" r="3.2" fill="#808080"/><circle cx="115" cy="313.7" r="3.2" fill="#808080"/><circle cx="115" cy="331.7" r="3.2" fill="#808080"/><circle cx="115" cy="349.7" r="3.2" fill="#808080"/><circle cx="115" cy="367.7" r="3.2" fill="#808080"/><circle cx="115" cy="385.7" r="3.2" fill="#808080"/><circle cx="115" cy="403.7" r="3.2" fill="#808080"/><circle cx="115" cy="421.7" r="3.2" fill="#808080"/><circle cx="115" cy="439.7" r="3.2" fill="#808080"/><circle cx="115" cy="457.7" r="3.2" fill="#808080"/><circle cx="115" cy="475.7" r="3.2" fill="#808080"/><circle cx="115" cy="493.7" r="3.2" fill="#808080"/><circle cx="115" cy="511.7" r="3.2" fill="#808080"/><circle cx="115" cy="529.7" r="3.2" fill="#808080"/><circle cx="115" cy="547.7" r="3.2" fill="#808080"/><circle cx="115" cy="565.7" r="3.2" fill="#808080"/><circle cx="115" cy="583.7" r="3.2" fill="#808080"/><circle cx="115" cy="601.7" r="3.2" fill="#808080"/><rect x="2" y="6" width="107" height="4" fill="#ff0000"/><rect x="2" y="25" width="106" height="2" fill="#00bbff"/><rect x="2" y="43" width="106" height="2" fill="#00bbff"/><rect x="2" y="61" width="106" height="2" fill="#00bbff"/><rect x="2" y="79" width="106" height="2" fill="#00bbff"/><rect x="2" y="97" width="106" height="2" fill="#00bbff"/><rect x="2" y="115" width="106" height="2" fill="#00bbff"/><rect x="2" y="133" width="106" height="2" fill="#00bbff"/><rect x="2" y="151" width="106" height="2" fill="#00bbff"/><rect x="2" y="169" width="106" height="2" fill="#00bbff"/><rect x="2" y="187" width="106" height="2" fill="#00bbff"/><rect x="2" y="205" width="106" height="2" fill="#00bbff"/><rect x="2" y="223" width="106" height="2" fill="#00bbff"/><rect x="2" y="241" width="106" height="2" fill="#00bbff"/><rect x="2" y="259" width="106" height="2" fill="#00bbff"/><rect x="2" y="277" width="106" height="2" fill="#00bbff"/><rect x="2" y="295" width="106" height="2" fill="#00bbff"/><rect x="2" y="313" width="106" height="2" fill="#00bbff"/><rect x="2" y="331" width="106" height="2" fill="#00bbff"/><rect x="2" y="349" width="106" height="2" fill="#00bbff"/><rect x="2" y="367" width="106" height="2" fill="#00bbff"/><rect x="2" y="385" width="106" height="2" fill="#00bbff"/><rect x="2" y="403" width="106" height="2" fill="#00bbff"/><rect x="2" y="421" width="106" height="2" fill="#00bbff"/><rect x="2" y="439" width="106" height="2" fill="#00bbff"/><rect x="2" y="457" width="106" height="2" fill="#00bbff"/><rect x="2" y="475" width="106" height="2" fill="#00bbff"/><rect x="2" y="493" width="106" height="2" fill="#00bbff"/><rect x="2" y="511" width="106" height="2" fill="#00bbff"/><rect x="2" y="529" width="106" height="2" fill="#00bbff"/><rect x="2" y="547" width="106" height="2" fill="#00bbff"/><rect x="16" y="565" width="92" height="2" fill="#00bbff"/><rect x="16" y="565" width="2" height="63" fill="#00bbff"/><path d="M10 621 L17 628 L24 621" stroke="#00bbff" stroke-width="2" fill="none"/><rect x="38" y="583" width="70" height="2" fill="#00bbff"/><rect x="38" y="583" width="2" height="45" fill="#00bbff"/><path d="M32 621 L39 628 L46 621" stroke="#00bbff" stroke-width="2" fill="none"/><rect x="60" y="601" width="48" height="2" fill="#00bbff"/><rect x="60" y="601" width="2" height="27" fill="#00bbff"/><path d="M54 621 L61 628 L68 621" stroke="#00bbff" stroke-width="2" fill="none"/></svg>
<svg style="left:0px;top:171px" width="300" height="605" viewBox="0 0 300 605"><path d="M262 6 L267 11 L272 6" stroke="#ff0000" stroke-width="2.2" fill="none"/><path d="M262 24 L267 29 L272 24" stroke="#ff0000" stroke-width="2.2" fill="none"/><path d="M262 42 L267 47 L272 42" stroke="#ff0000" stroke-width="2.2" fill="none"/><path d="M262 60 L267 65 L272 60" stroke="#ff0000" stroke-width="2.2" fill="none"/><path d="M262 78 L267 83 L272 78" stroke="#ff0000" stroke-width="2.2" fill="none"/><path d="M262 96 L267 101 L272 96" stroke="#ff0000" stroke-width="2.2" fill="none"/><path d="M262 114 L267 119 L272 114" stroke="#ff0000" stroke-width="2.2" fill="none"/><path d="M262 132 L267 137 L272 132" stroke="#ff0000" stroke-width="2.2" fill="none"/><path d="M262 150 L267 155 L272 150" stroke="#ff0000" stroke-width="2.2" fill="none"/><path d="M262 168 L267 173 L272 168" stroke="#ff0000" stroke-width="2.2" fill="none"/><path d="M262 186 L267 191 L272 186" stroke="#ff0000" stroke-width="2.2" fill="none"/><path d="M262 204 L267 209 L272 204" stroke="#ff0000" stroke-width="2.2" fill="none"/><path d="M262 222 L267 227 L272 222" stroke="#ff0000" stroke-width="2.2" fill="none"/><path d="M262 240 L267 245 L272 240" stroke="#ff0000" stroke-width="2.2" fill="none"/><path d="M262 258 L267 263 L272 258" stroke="#ff0000" stroke-width="2.2" fill="none"/><path d="M262 276 L267 281 L272 276" stroke="#ff0000" stroke-width="2.2" fill="none"/><path d="M262 294 L267 299 L272 294" stroke="#ff0000" stroke-width="2.2" fill="none"/><path d="M262 312 L267 317 L272 312" stroke="#ff0000" stroke-width="2.2" fill="none"/><path d="M262 330 L267 335 L272 330" stroke="#ff0000" stroke-width="2.2" fill="none"/><path d="M262 348 L267 353 L272 348" stroke="#ff0000" stroke-width="2.2" fill="none"/><path d="M262 366 L267 371 L272 366" stroke="#ff0000" stroke-width="2.2" fill="none"/><path d="M262 384 L267 389 L272 384" stroke="#ff0000" stroke-width="2.2" fill="none"/><path d="M262 402 L267 407 L272 402" stroke="#ff0000" stroke-width="2.2" fill="none"/><path d="M262 420 L267 425 L272 420" stroke="#ff0000" stroke-width="2.2" fill="none"/><path d="M262 438 L267 443 L272 438" stroke="#ff0000" stroke-width="2.2" fill="none"/><path d="M262 456 L267 461 L272 456" stroke="#ff0000" stroke-width="2.2" fill="none"/><path d="M262 474 L267 479 L272 474" stroke="#ff0000" stroke-width="2.2" fill="none"/><path d="M262 492 L267 497 L272 492" stroke="#ff0000" stroke-width="2.2" fill="none"/><path d="M262 510 L267 515 L272 510" stroke="#ff0000" stroke-width="2.2" fill="none"/><path d="M262 528 L267 533 L272 528" stroke="#ff0000" stroke-width="2.2" fill="none"/><path d="M262 546 L267 551 L272 546" stroke="#ff0000" stroke-width="2.2" fill="none"/><path d="M262 564 L267 569 L272 564" stroke="#ff0000" stroke-width="2.2" fill="none"/><path d="M262 582 L267 587 L272 582" stroke="#ff0000" stroke-width="2.2" fill="none"/><path d="M262 600 L267 605 L272 600" stroke="#ff0000" stroke-width="2.2" fill="none"/><rect x="278" y="7" width="2" height="598" fill="#ff0000"/><rect x="278" y="7" width="12" height="2" fill="#ff0000"/></svg>
<div style="left:1px;top:803px;width:1735px;height:86px;background:#FFF8F0;border:1px solid #a0a0a0;"></div>
<span class="m" style="left:11px;top:808px;color:#000;">consoleapplication2.004126<i>D</i>0</span>
<span class="m" style="left:11px;top:862px;color:#000;">UPX0:00411046 consoleapplication2.exe:$11046 #0</span>
<div style="left:1691px;top:170px;width:45px;height:33px;background:#f0f0f0;"></div>
<div style="left:1691px;top:171px;width:44px;height:31px;background:#e0e0e0;border:1px solid #a8a8a8;border-left:none;"></div>
<div style="left:1691px;top:203px;width:20px;height:1px;background:#5a6a80;"></div>
<div style="left:1691px;top:204px;width:20px;height:459px;background:#FFF8F0;"></div>
<div style="left:1711px;top:204px;width:25px;height:459px;background:#f0f0f0;"></div>
<div style="left:1712px;top:229px;width:23px;height:160px;background:#cdcdcd;"></div>
<svg style="left:1716px;top:212px" width="16" height="12" viewBox="0 0 16 12"><path d="M2 9 L8 3 L14 9" stroke="#555" stroke-width="2.6" fill="none"/></svg>
<svg style="left:1716px;top:644px" width="16" height="12" viewBox="0 0 16 12"><path d="M2 3 L8 9 L14 3" stroke="#555" stroke-width="2.6" fill="none"/></svg>
<div style="left:1691px;top:204px;width:20px;height:459px;overflow:hidden;">
<span style="left:4px;top:41px;font-size:16px;color:#000;">on</span>
<span style="left:4px;top:57px;font-size:16px;color:#000;">on</span>
<span style="left:4px;top:105px;font-size:16px;color:#000;">on</span>
<span style="left:4px;top:121px;font-size:16px;color:#000;">on</span>
<span style="left:-12px;top:153px;font-size:16px;color:#000;">3DF</span>
<span style="left:1px;top:281px;font-size:16px;color:#000;">OU </span>
<span style="left:-4px;top:375px;font-size:16px;color:#000;">000</span>
<span style="left:-4px;top:392px;font-size:16px;color:#000;">000</span>
<span style="left:-4px;top:408px;font-size:16px;color:#000;">000</span>
<span style="left:-4px;top:425px;font-size:16px;color:#000;">000</span>
<span style="left:-4px;top:441px;font-size:16px;color:#000;">000</span>
<span style="left:-4px;top:457px;font-size:16px;color:#000;">000</span>
</div>
<div style="left:1691px;top:663px;width:45px;height:27px;background:#f0f0f0;"></div>
<div style="left:1691px;top:690px;width:45px;height:39px;background:#f0f0f0;"></div>
<svg style="left:1692px;top:668px" width="12" height="16" viewBox="0 0 12 16"><path d="M3 2 L9 8 L3 14" stroke="#555" stroke-width="2.6" fill="none"/></svg>
<div style="left:1691px;top:729px;width:45px;height:160px;border:1px solid #a8a8a8;border-left:none;background:#f0f0f0;"></div>
<div style="left:1691px;top:730px;width:18px;height:18px;background:#c0c0c0;"></div>
<div style="left:1691px;top:748px;width:18px;height:140px;background:#FFF8F0;"></div>
<span style="left:1686px;top:750px;font-size:16px;color:#000;">Th</span>
<svg style="left:1715px;top:740px" width="16" height="12" viewBox="0 0 16 12"><path d="M2 9 L8 3 L14 9" stroke="#c8c8c8" stroke-width="2.6" fill="none"/></svg>
<svg style="left:1715px;top:868px" width="16" height="12" viewBox="0 0 16 12"><path d="M2 3 L8 9 L14 3" stroke="#c8c8c8" stroke-width="2.6" fill="none"/></svg>
<div style="left:1px;top:889px;width:1735px;height:42px;background:#f0f0f0;"></div>
<div style="left:1px;top:929px;width:1735px;height:2px;background:#b4b4b4;"></div>
<div style="left:1px;top:891px;width:125px;height:39px;background:#fff;"></div>
<div style="left:244px;top:895px;width:1px;height:33px;background:#dadada;"></div>
<div style="left:366px;top:895px;width:1px;height:33px;background:#dadada;"></div>
<div style="left:488px;top:895px;width:1px;height:33px;background:#dadada;"></div>
<div style="left:610px;top:895px;width:1px;height:33px;background:#dadada;"></div>
<div style="left:732px;top:895px;width:1px;height:33px;background:#dadada;"></div>
<span style="left:53px;top:903px;font-size:17px;color:#111;font-family:'Liberation Serif',serif;">内存 1</span>
<span style="left:175px;top:903px;font-size:17px;color:#111;font-family:'Liberation Serif',serif;">内存 2</span>
<span style="left:297px;top:903px;font-size:17px;color:#111;font-family:'Liberation Serif',serif;">内存 3</span>
<span style="left:419px;top:903px;font-size:17px;color:#111;font-family:'Liberation Serif',serif;">内存 4</span>
<span style="left:541px;top:903px;font-size:17px;color:#111;font-family:'Liberation Serif',serif;">内存 5</span>
<span style="left:662px;top:903px;font-size:17px;color:#111;font-family:'Liberation Serif',serif;">监视 1</span>
<span style="left:784px;top:903px;font-size:17px;color:#111;font-family:'Liberation Serif',serif;">局部</span>
<svg style="left:19px;top:899px" width="25" height="22" viewBox="0 0 25 22"><rect x="0" y="6" width="6" height="12" fill="#e8b020" stroke="#555" stroke-width=".8"/><rect x="6" y="2" width="18" height="16" fill="#c8c8c8" stroke="#999"/><path d="M9 4 V16 M13 4 V16 M17 4 V16 M21 4 V16" stroke="#888"/><circle cx="4" cy="19" r="2.5" fill="#444"/><circle cx="19" cy="19" r="2.5" fill="#444"/></svg>
<svg style="left:141px;top:899px" width="25" height="22" viewBox="0 0 25 22"><rect x="0" y="6" width="6" height="12" fill="#e8b020" stroke="#555" stroke-width=".8"/><rect x="6" y="2" width="18" height="16" fill="#c8c8c8" stroke="#999"/><path d="M9 4 V16 M13 4 V16 M17 4 V16 M21 4 V16" stroke="#888"/><circle cx="4" cy="19" r="2.5" fill="#444"/><circle cx="19" cy="19" r="2.5" fill="#444"/></svg>
<svg style="left:263px;top:899px" width="25" height="22" viewBox="0 0 25 22"><rect x="0" y="6" width="6" height="12" fill="#e8b020" stroke="#555" stroke-width=".8"/><rect x="6" y="2" width="18" height="16" fill="#c8c8c8" stroke="#999"/><path d="M9 4 V16 M13 4 V16 M17 4 V16 M21 4 V16" stroke="#888"/><circle cx="4" cy="19" r="2.5" fill="#444"/><circle cx="19" cy="19" r="2.5" fill="#444"/></svg>
<svg style="left:385px;top:899px" width="25" height="22" viewBox="0 0 25 22"><rect x="0" y="6" width="6" height="12" fill="#e8b020" stroke="#555" stroke-width=".8"/><rect x="6" y="2" width="18" height="16" fill="#c8c8c8" stroke="#999"/><path d="M9 4 V16 M13 4 V16 M17 4 V16 M21 4 V16" stroke="#888"/><circle cx="4" cy="19" r="2.5" fill="#444"/><circle cx="19" cy="19" r="2.5" fill="#444"/></svg>
<svg style="left:507px;top:899px" width="25" height="22" viewBox="0 0 25 22"><rect x="0" y="6" width="6" height="12" fill="#e8b020" stroke="#555" stroke-width=".8"/><rect x="6" y="2" width="18" height="16" fill="#c8c8c8" stroke="#999"/><path d="M9 4 V16 M13 4 V16 M17 4 V16 M21 4 V16" stroke="#888"/><circle cx="4" cy="19" r="2.5" fill="#444"/><circle cx="19" cy="19" r="2.5" fill="#444"/></svg>
<svg style="left:628px;top:897px" width="23" height="24" viewBox="0 0 23 24"><circle cx="11.5" cy="13" r="10" fill="#d89a5a"/><path d="M3 6 L5 1 L9 5Z M20 6 L18 1 L14 5Z" fill="#c07a3a"/><circle cx="8" cy="12" r="1.5" fill="#333"/><circle cx="15" cy="12" r="1.5" fill="#333"/><ellipse cx="11.5" cy="17" rx="4" ry="3" fill="#f0d0a0"/></svg>
<svg style="left:751px;top:902px" width="23" height="16" viewBox="0 0 23 16"><path d="M1 2 V14 M22 2 V14" stroke="#333" stroke-width="1.5"/><text x="4" y="12" font-size="10" fill="#c44" font-family="Liberation Mono">x=</text></svg>
<div style="left:1px;top:931px;width:1049px;height:264px;background:#FFF8F0;border:1px solid #a0a0a0;"></div>
<div style="left:2px;top:932px;width:1022px;height:21px;background:#c0c0c0;"></div>
<div style="left:2px;top:953px;width:1022px;height:4px;background:#808080;"></div>
<div style="left:95px;top:933px;width:3px;height:24px;background:#808080;"></div>
<div style="left:582px;top:933px;width:3px;height:24px;background:#808080;"></div>
<div style="left:757px;top:933px;width:3px;height:24px;background:#808080;"></div>
<span style="left:11px;top:935px;font-size:16px;color:#000;font-family:'Liberation Serif',serif;">地址</span>
<span style="left:107px;top:935px;font-size:16px;color:#000;font-family:'Liberation Serif',serif;">十六进制</span>
<span class="m" style="left:593px;top:936px;color:#000;font-size:15px;">ASCII</span>
<div style="left:97px;top:957px;width:2px;height:208px;background:#808080;"></div>
<div style="left:219px;top:957px;width:3px;height:198px;background:#808080;"></div>
<div style="left:339px;top:957px;width:3px;height:198px;background:#808080;"></div>
<div style="left:459px;top:957px;width:3px;height:198px;background:#808080;"></div>
<div style="left:582px;top:957px;width:3px;height:208px;background:#808080;"></div>
<div style="left:757px;top:957px;width:2px;height:208px;background:#808080;"></div>
<div style="left:99px;top:957px;width:30px;height:18px;background:#c0c0c0;"></div>
<div style="left:592px;top:957px;width:10px;height:18px;background:#c0c0c0;"></div>
<span class="m" style="left:11px;top:958px;color:#ff0000">0019<i>F</i><i>F</i>54</span>
<span class="m" style="left:106px;top:958px;color:#000000;letter-spacing:0.46px"><i>B</i>0</span>
<span class="m" style="left:593px;top:958px;color:#000">°</span>
<span class="m" style="left:136px;top:958px;color:#000000;letter-spacing:0.46px">8<i>C</i></span>
<span class="m" style="left:603px;top:958px;color:#000">.</span>
<span class="m" style="left:166px;top:958px;color:#800080;letter-spacing:0.46px">43</span>
<span class="m" style="left:613px;top:958px;color:#800080">C</span>
<span class="m" style="left:196px;top:958px;color:#008000;letter-spacing:0.46px">00</span>
<span class="m" style="left:623px;top:958px;color:#008000">.</span>
<span class="m" style="left:226px;top:958px;color:#000000;letter-spacing:0.46px"><i>B</i>0</span>
<span class="m" style="left:633px;top:958px;color:#000">°</span>
<span class="m" style="left:256px;top:958px;color:#000000;letter-spacing:0.46px">8<i>C</i></span>
<span class="m" style="left:643px;top:958px;color:#000">.</span>
<span class="m" style="left:286px;top:958px;color:#800080;letter-spacing:0.46px">43</span>
<span class="m" style="left:653px;top:958px;color:#800080">C</span>
<span class="m" style="left:316px;top:958px;color:#008000;letter-spacing:0.46px">00</span>
<span class="m" style="left:663px;top:958px;color:#008000">.</span>
<span class="m" style="left:346px;top:958px;color:#000000;letter-spacing:0.46px">80</span>
<span class="m" style="left:673px;top:958px;color:#000">.</span>
<span class="m" style="left:376px;top:958px;color:#800000;letter-spacing:0.46px"><i>F</i><i>F</i></span>
<span class="m" style="left:683px;top:958px;color:#800000">ÿ</span>
<span class="m" style="left:406px;top:958px;color:#000000;letter-spacing:0.46px">19</span>
<span class="m" style="left:693px;top:958px;color:#000">.</span>
<span class="m" style="left:436px;top:958px;color:#008000;letter-spacing:0.46px">00</span>
<span class="m" style="left:703px;top:958px;color:#008000">.</span>
<span class="m" style="left:466px;top:958px;color:#800080;letter-spacing:0.46px">74</span>
<span class="m" style="left:713px;top:958px;color:#800080">t</span>
<span class="m" style="left:496px;top:958px;color:#800000;letter-spacing:0.46px"><i>F</i><i>F</i></span>
<span class="m" style="left:723px;top:958px;color:#800000">ÿ</span>
<span class="m" style="left:526px;top:958px;color:#000000;letter-spacing:0.46px">19</span>
<span class="m" style="left:733px;top:958px;color:#000">.</span>
<span class="m" style="left:556px;top:958px;color:#008000;letter-spacing:0.46px">00</span>
<span class="m" style="left:743px;top:958px;color:#008000">.</span>
<div style="left:103px;top:971px;width:124px;height:4px;background:#808080"></div>
<div style="left:103px;top:971px;width:30px;height:4px;background:#00ff00"></div>
<div style="left:223px;top:971px;width:124px;height:4px;background:#808080"></div>
<div style="left:223px;top:971px;width:30px;height:4px;background:#00ff00"></div>
<div style="left:343px;top:971px;width:124px;height:4px;background:#808080"></div>
<div style="left:343px;top:971px;width:30px;height:4px;background:#000080"></div>
<div style="left:463px;top:971px;width:124px;height:4px;background:#808080"></div>
<div style="left:463px;top:971px;width:30px;height:4px;background:#000080"></div>
<span class="m" style="left:11px;top:976px;color:#000">0019<i>F</i><i>F</i>64</span>
<span class="m" style="left:106px;top:976px;color:#008000;letter-spacing:0.46px">00</span>
<span class="m" style="left:593px;top:976px;color:#008000">.</span>
<span class="m" style="left:136px;top:976px;color:#000000;letter-spacing:0.46px"><i>A</i>0</span>
<span class="m" style="left:603px;top:976px;color:#000"> </span>
<span class="m" style="left:166px;top:976px;color:#800080;letter-spacing:0.46px">2<i>D</i></span>
<span class="m" style="left:613px;top:976px;color:#800080">-</span>
<span class="m" style="left:196px;top:976px;color:#008000;letter-spacing:0.46px">00</span>
<span class="m" style="left:623px;top:976px;color:#008000">.</span>
<span class="m" style="left:226px;top:976px;color:#000000;letter-spacing:0.46px"><i>B</i>0</span>
<span class="m" style="left:633px;top:976px;color:#000">°</span>
<span class="m" style="left:256px;top:976px;color:#000000;letter-spacing:0.46px">8<i>C</i></span>
<span class="m" style="left:643px;top:976px;color:#000">.</span>
<span class="m" style="left:286px;top:976px;color:#800080;letter-spacing:0.46px">43</span>
<span class="m" style="left:653px;top:976px;color:#800080">C</span>
<span class="m" style="left:316px;top:976px;color:#008000;letter-spacing:0.46px">00</span>
<span class="m" style="left:663px;top:976px;color:#008000">.</span>
<span class="m" style="left:346px;top:976px;color:#000000;letter-spacing:0.46px"><i>B</i>0</span>
<span class="m" style="left:673px;top:976px;color:#000">°</span>
<span class="m" style="left:376px;top:976px;color:#000000;letter-spacing:0.46px">8<i>C</i></span>
<span class="m" style="left:683px;top:976px;color:#000">.</span>
<span class="m" style="left:406px;top:976px;color:#800080;letter-spacing:0.46px">43</span>
<span class="m" style="left:693px;top:976px;color:#800080">C</span>
<span class="m" style="left:436px;top:976px;color:#008000;letter-spacing:0.46px">00</span>
<span class="m" style="left:703px;top:976px;color:#008000">.</span>
<span class="m" style="left:466px;top:976px;color:#000000;letter-spacing:0.46px"><i>C</i><i>C</i></span>
<span class="m" style="left:713px;top:976px;color:#000">Ì</span>
<span class="m" style="left:496px;top:976px;color:#800000;letter-spacing:0.46px"><i>F</i><i>F</i></span>
<span class="m" style="left:723px;top:976px;color:#800000">ÿ</span>
<span class="m" style="left:526px;top:976px;color:#000000;letter-spacing:0.46px">19</span>
<span class="m" style="left:733px;top:976px;color:#000">.</span>
<span class="m" style="left:556px;top:976px;color:#008000;letter-spacing:0.46px">00</span>
<span class="m" style="left:743px;top:976px;color:#008000">.</span>
<div style="left:103px;top:989px;width:124px;height:4px;background:#808080"></div>
<div style="left:103px;top:989px;width:30px;height:4px;background:#000080"></div>
<div style="left:223px;top:989px;width:124px;height:4px;background:#808080"></div>
<div style="left:223px;top:989px;width:30px;height:4px;background:#00ff00"></div>
<div style="left:343px;top:989px;width:124px;height:4px;background:#808080"></div>
<div style="left:343px;top:989px;width:30px;height:4px;background:#00ff00"></div>
<div style="left:463px;top:989px;width:124px;height:4px;background:#808080"></div>
<div style="left:463px;top:989px;width:30px;height:4px;background:#000080"></div>
<span class="m" style="left:11px;top:994px;color:#000">0019<i>F</i><i>F</i>74</span>
<span class="m" style="left:106px;top:994px;color:#000000;letter-spacing:0.46px"><i>C</i>9</span>
<span class="m" style="left:593px;top:994px;color:#000">É</span>
<span class="m" style="left:136px;top:994px;color:#000000;letter-spacing:0.46px"><i>F</i><i>C</i></span>
<span class="m" style="left:603px;top:994px;color:#000">ü</span>
<span class="m" style="left:166px;top:994px;color:#800080;letter-spacing:0.46px">6<i>A</i></span>
<span class="m" style="left:613px;top:994px;color:#800080">j</span>
<span class="m" style="left:196px;top:994px;color:#800080;letter-spacing:0.46px">77</span>
<span class="m" style="left:623px;top:994px;color:#800080">w</span>
<span class="m" style="left:226px;top:994px;color:#008000;letter-spacing:0.46px">00</span>
<span class="m" style="left:633px;top:994px;color:#008000">.</span>
<span class="m" style="left:256px;top:994px;color:#000000;letter-spacing:0.46px"><i>A</i>0</span>
<span class="m" style="left:643px;top:994px;color:#000"> </span>
<span class="m" style="left:286px;top:994px;color:#800080;letter-spacing:0.46px">2<i>D</i></span>
<span class="m" style="left:653px;top:994px;color:#800080">-</span>
<span class="m" style="left:316px;top:994px;color:#008000;letter-spacing:0.46px">00</span>
<span class="m" style="left:663px;top:994px;color:#008000">.</span>
<span class="m" style="left:346px;top:994px;color:#000000;letter-spacing:0.46px"><i>B</i>0</span>
<span class="m" style="left:673px;top:994px;color:#000">°</span>
<span class="m" style="left:376px;top:994px;color:#000000;letter-spacing:0.46px"><i>F</i><i>C</i></span>
<span class="m" style="left:683px;top:994px;color:#000">ü</span>
<span class="m" style="left:406px;top:994px;color:#800080;letter-spacing:0.46px">6<i>A</i></span>
<span class="m" style="left:693px;top:994px;color:#800080">j</span>
<span class="m" style="left:436px;top:994px;color:#800080;letter-spacing:0.46px">77</span>
<span class="m" style="left:703px;top:994px;color:#800080">w</span>
<span class="m" style="left:466px;top:994px;color:#000000;letter-spacing:0.46px"><i>D</i><i>C</i></span>
<span class="m" style="left:713px;top:994px;color:#000">Ü</span>
<span class="m" style="left:496px;top:994px;color:#800000;letter-spacing:0.46px"><i>F</i><i>F</i></span>
<span class="m" style="left:723px;top:994px;color:#800000">ÿ</span>
<span class="m" style="left:526px;top:994px;color:#000000;letter-spacing:0.46px">19</span>
<span class="m" style="left:733px;top:994px;color:#000">.</span>
<span class="m" style="left:556px;top:994px;color:#008000;letter-spacing:0.46px">00</span>
<span class="m" style="left:743px;top:994px;color:#008000">.</span>
<div style="left:103px;top:1007px;width:124px;height:4px;background:#808080"></div>
<div style="left:103px;top:1007px;width:30px;height:4px;background:#ff0000"></div>
<div style="left:223px;top:1007px;width:124px;height:4px;background:#808080"></div>
<div style="left:223px;top:1007px;width:30px;height:4px;background:#000080"></div>
<div style="left:343px;top:1007px;width:124px;height:4px;background:#808080"></div>
<div style="left:343px;top:1007px;width:30px;height:4px;background:#ff0000"></div>
<div style="left:463px;top:1007px;width:124px;height:4px;background:#808080"></div>
<div style="left:463px;top:1007px;width:30px;height:4px;background:#000080"></div>
<span class="m" style="left:11px;top:1012px;color:#000">0019<i>F</i><i>F</i>84</span>
<span class="m" style="left:106px;top:1012px;color:#000000;letter-spacing:0.46px"><i>A</i><i>E</i></span>
<span class="m" style="left:593px;top:1012px;color:#000">®</span>
<span class="m" style="left:136px;top:1012px;color:#000000;letter-spacing:0.46px">82</span>
<span class="m" style="left:603px;top:1012px;color:#000">.</span>
<span class="m" style="left:166px;top:1012px;color:#000000;letter-spacing:0.46px"><i>A</i>5</span>
<span class="m" style="left:613px;top:1012px;color:#000">¥</span>
<span class="m" style="left:196px;top:1012px;color:#800080;letter-spacing:0.46px">77</span>
<span class="m" style="left:623px;top:1012px;color:#800080">w</span>
<span class="m" style="left:226px;top:1012px;color:#008000;letter-spacing:0.46px">00</span>
<span class="m" style="left:633px;top:1012px;color:#008000">.</span>
<span class="m" style="left:256px;top:1012px;color:#000000;letter-spacing:0.46px"><i>A</i>0</span>
<span class="m" style="left:643px;top:1012px;color:#000"> </span>
<span class="m" style="left:286px;top:1012px;color:#800080;letter-spacing:0.46px">2<i>D</i></span>
<span class="m" style="left:653px;top:1012px;color:#800080">-</span>
<span class="m" style="left:316px;top:1012px;color:#008000;letter-spacing:0.46px">00</span>
<span class="m" style="left:663px;top:1012px;color:#008000">.</span>
<span class="m" style="left:346px;top:1012px;color:#800080;letter-spacing:0.46px">0<i>A</i></span>
<span class="m" style="left:673px;top:1012px;color:#000">.</span>
<span class="m" style="left:376px;top:1012px;color:#000000;letter-spacing:0.46px">9<i>E</i></span>
<span class="m" style="left:683px;top:1012px;color:#000">.</span>
<span class="m" style="left:406px;top:1012px;color:#000000;letter-spacing:0.46px"><i>A</i>6</span>
<span class="m" style="left:693px;top:1012px;color:#000">¦</span>
<span class="m" style="left:436px;top:1012px;color:#800080;letter-spacing:0.46px">37</span>
<span class="m" style="left:703px;top:1012px;color:#800080">7</span>
<span class="m" style="left:466px;top:1012px;color:#008000;letter-spacing:0.46px">00</span>
<span class="m" style="left:713px;top:1012px;color:#008000">.</span>
<span class="m" style="left:496px;top:1012px;color:#008000;letter-spacing:0.46px">00</span>
<span class="m" style="left:723px;top:1012px;color:#008000">.</span>
<span class="m" style="left:526px;top:1012px;color:#008000;letter-spacing:0.46px">00</span>
<span class="m" style="left:733px;top:1012px;color:#008000">.</span>
<span class="m" style="left:556px;top:1012px;color:#008000;letter-spacing:0.46px">00</span>
<span class="m" style="left:743px;top:1012px;color:#008000">.</span>
<div style="left:103px;top:1025px;width:124px;height:4px;background:#808080"></div>
<div style="left:103px;top:1025px;width:30px;height:4px;background:#ff0000"></div>
<div style="left:223px;top:1025px;width:124px;height:4px;background:#808080"></div>
<div style="left:223px;top:1025px;width:30px;height:4px;background:#000080"></div>
<span class="m" style="left:11px;top:1030px;color:#000">0019<i>F</i><i>F</i>94</span>
<span class="m" style="left:106px;top:1030px;color:#008000;letter-spacing:0.46px">00</span>
<span class="m" style="left:593px;top:1030px;color:#008000">.</span>
<span class="m" style="left:136px;top:1030px;color:#008000;letter-spacing:0.46px">00</span>
<span class="m" style="left:603px;top:1030px;color:#008000">.</span>
<span class="m" style="left:166px;top:1030px;color:#008000;letter-spacing:0.46px">00</span>
<span class="m" style="left:613px;top:1030px;color:#008000">.</span>
<span class="m" style="left:196px;top:1030px;color:#008000;letter-spacing:0.46px">00</span>
<span class="m" style="left:623px;top:1030px;color:#008000">.</span>
<span class="m" style="left:226px;top:1030px;color:#008000;letter-spacing:0.46px">00</span>
<span class="m" style="left:633px;top:1030px;color:#008000">.</span>
<span class="m" style="left:256px;top:1030px;color:#000000;letter-spacing:0.46px"><i>A</i>0</span>
<span class="m" style="left:643px;top:1030px;color:#000"> </span>
<span class="m" style="left:286px;top:1030px;color:#800080;letter-spacing:0.46px">2<i>D</i></span>
<span class="m" style="left:653px;top:1030px;color:#800080">-</span>
<span class="m" style="left:316px;top:1030px;color:#008000;letter-spacing:0.46px">00</span>
<span class="m" style="left:663px;top:1030px;color:#008000">.</span>
<span class="m" style="left:346px;top:1030px;color:#008000;letter-spacing:0.46px">00</span>
<span class="m" style="left:673px;top:1030px;color:#008000">.</span>
<span class="m" style="left:376px;top:1030px;color:#008000;letter-spacing:0.46px">00</span>
<span class="m" style="left:683px;top:1030px;color:#008000">.</span>
<span class="m" style="left:406px;top:1030px;color:#008000;letter-spacing:0.46px">00</span>
<span class="m" style="left:693px;top:1030px;color:#008000">.</span>
<span class="m" style="left:436px;top:1030px;color:#008000;letter-spacing:0.46px">00</span>
<span class="m" style="left:703px;top:1030px;color:#008000">.</span>
<span class="m" style="left:466px;top:1030px;color:#008000;letter-spacing:0.46px">00</span>
<span class="m" style="left:713px;top:1030px;color:#008000">.</span>
<span class="m" style="left:496px;top:1030px;color:#008000;letter-spacing:0.46px">00</span>
<span class="m" style="left:723px;top:1030px;color:#008000">.</span>
<span class="m" style="left:526px;top:1030px;color:#008000;letter-spacing:0.46px">00</span>
<span class="m" style="left:733px;top:1030px;color:#008000">.</span>
<span class="m" style="left:556px;top:1030px;color:#008000;letter-spacing:0.46px">00</span>
<span class="m" style="left:743px;top:1030px;color:#008000">.</span>
<div style="left:223px;top:1043px;width:124px;height:4px;background:#808080"></div>
<div style="left:223px;top:1043px;width:30px;height:4px;background:#000080"></div>
<span class="m" style="left:11px;top:1048px;color:#000">0019<i>F</i><i>F</i><i>A</i>4</span>
<span class="m" style="left:106px;top:1048px;color:#008000;letter-spacing:0.46px">00</span>
<span class="m" style="left:593px;top:1048px;color:#008000">.</span>
<span class="m" style="left:136px;top:1048px;color:#008000;letter-spacing:0.46px">00</span>
<span class="m" style="left:603px;top:1048px;color:#008000">.</span>
<span class="m" style="left:166px;top:1048px;color:#008000;letter-spacing:0.46px">00</span>
<span class="m" style="left:613px;top:1048px;color:#008000">.</span>
<span class="m" style="left:196px;top:1048px;color:#008000;letter-spacing:0.46px">00</span>
<span class="m" style="left:623px;top:1048px;color:#008000">.</span>
<span class="m" style="left:226px;top:1048px;color:#008000;letter-spacing:0.46px">00</span>
<span class="m" style="left:633px;top:1048px;color:#008000">.</span>
<span class="m" style="left:256px;top:1048px;color:#008000;letter-spacing:0.46px">00</span>
<span class="m" style="left:643px;top:1048px;color:#008000">.</span>
<span class="m" style="left:286px;top:1048px;color:#008000;letter-spacing:0.46px">00</span>
<span class="m" style="left:653px;top:1048px;color:#008000">.</span>
<span class="m" style="left:316px;top:1048px;color:#008000;letter-spacing:0.46px">00</span>
<span class="m" style="left:663px;top:1048px;color:#008000">.</span>
<span class="m" style="left:346px;top:1048px;color:#008000;letter-spacing:0.46px">00</span>
<span class="m" style="left:673px;top:1048px;color:#008000">.</span>
<span class="m" style="left:376px;top:1048px;color:#008000;letter-spacing:0.46px">00</span>
<span class="m" style="left:683px;top:1048px;color:#008000">.</span>
<span class="m" style="left:406px;top:1048px;color:#008000;letter-spacing:0.46px">00</span>
<span class="m" style="left:693px;top:1048px;color:#008000">.</span>
<span class="m" style="left:436px;top:1048px;color:#008000;letter-spacing:0.46px">00</span>
<span class="m" style="left:703px;top:1048px;color:#008000">.</span>
<span class="m" style="left:466px;top:1048px;color:#008000;letter-spacing:0.46px">00</span>
<span class="m" style="left:713px;top:1048px;color:#008000">.</span>
<span class="m" style="left:496px;top:1048px;color:#008000;letter-spacing:0.46px">00</span>
<span class="m" style="left:723px;top:1048px;color:#008000">.</span>
<span class="m" style="left:526px;top:1048px;color:#008000;letter-spacing:0.46px">00</span>
<span class="m" style="left:733px;top:1048px;color:#008000">.</span>
<span class="m" style="left:556px;top:1048px;color:#008000;letter-spacing:0.46px">00</span>
<span class="m" style="left:743px;top:1048px;color:#008000">.</span>
<span class="m" style="left:11px;top:1066px;color:#000">0019<i>F</i><i>F</i><i>B</i>4</span>
<span class="m" style="left:106px;top:1066px;color:#008000;letter-spacing:0.46px">00</span>
<span class="m" style="left:593px;top:1066px;color:#008000">.</span>
<span class="m" style="left:136px;top:1066px;color:#008000;letter-spacing:0.46px">00</span>
<span class="m" style="left:603px;top:1066px;color:#008000">.</span>
<span class="m" style="left:166px;top:1066px;color:#008000;letter-spacing:0.46px">00</span>
<span class="m" style="left:613px;top:1066px;color:#008000">.</span>
<span class="m" style="left:196px;top:1066px;color:#008000;letter-spacing:0.46px">00</span>
<span class="m" style="left:623px;top:1066px;color:#008000">.</span>
<span class="m" style="left:226px;top:1066px;color:#008000;letter-spacing:0.46px">00</span>
<span class="m" style="left:633px;top:1066px;color:#008000">.</span>
<span class="m" style="left:256px;top:1066px;color:#008000;letter-spacing:0.46px">00</span>
<span class="m" style="left:643px;top:1066px;color:#008000">.</span>
<span class="m" style="left:286px;top:1066px;color:#008000;letter-spacing:0.46px">00</span>
<span class="m" style="left:653px;top:1066px;color:#008000">.</span>
<span class="m" style="left:316px;top:1066px;color:#008000;letter-spacing:0.46px">00</span>
<span class="m" style="left:663px;top:1066px;color:#008000">.</span>
<span class="m" style="left:346px;top:1066px;color:#008000;letter-spacing:0.46px">00</span>
<span class="m" style="left:673px;top:1066px;color:#008000">.</span>
<span class="m" style="left:376px;top:1066px;color:#008000;letter-spacing:0.46px">00</span>
<span class="m" style="left:683px;top:1066px;color:#008000">.</span>
<span class="m" style="left:406px;top:1066px;color:#008000;letter-spacing:0.46px">00</span>
<span class="m" style="left:693px;top:1066px;color:#008000">.</span>
<span class="m" style="left:436px;top:1066px;color:#008000;letter-spacing:0.46px">00</span>
<span class="m" style="left:703px;top:1066px;color:#008000">.</span>
<span class="m" style="left:466px;top:1066px;color:#008000;letter-spacing:0.46px">00</span>
<span class="m" style="left:713px;top:1066px;color:#008000">.</span>
<span class="m" style="left:496px;top:1066px;color:#008000;letter-spacing:0.46px">00</span>
<span class="m" style="left:723px;top:1066px;color:#008000">.</span>
<span class="m" style="left:526px;top:1066px;color:#008000;letter-spacing:0.46px">00</span>
<span class="m" style="left:733px;top:1066px;color:#008000">.</span>
<span class="m" style="left:556px;top:1066px;color:#008000;letter-spacing:0.46px">00</span>
<span class="m" style="left:743px;top:1066px;color:#008000">.</span>
<span class="m" style="left:11px;top:1084px;color:#000">0019<i>F</i><i>F</i><i>C</i>4</span>
<span class="m" style="left:106px;top:1084px;color:#000000;letter-spacing:0.46px">8<i>C</i></span>
<span class="m" style="left:593px;top:1084px;color:#000">.</span>
<span class="m" style="left:136px;top:1084px;color:#800000;letter-spacing:0.46px"><i>F</i><i>F</i></span>
<span class="m" style="left:603px;top:1084px;color:#800000">ÿ</span>
<span class="m" style="left:166px;top:1084px;color:#000000;letter-spacing:0.46px">19</span>
<span class="m" style="left:613px;top:1084px;color:#000">.</span>
<span class="m" style="left:196px;top:1084px;color:#008000;letter-spacing:0.46px">00</span>
<span class="m" style="left:623px;top:1084px;color:#008000">.</span>
<span class="m" style="left:226px;top:1084px;color:#008000;letter-spacing:0.46px">00</span>
<span class="m" style="left:633px;top:1084px;color:#008000">.</span>
<span class="m" style="left:256px;top:1084px;color:#008000;letter-spacing:0.46px">00</span>
<span class="m" style="left:643px;top:1084px;color:#008000">.</span>
<span class="m" style="left:286px;top:1084px;color:#008000;letter-spacing:0.46px">00</span>
<span class="m" style="left:653px;top:1084px;color:#008000">.</span>
<span class="m" style="left:316px;top:1084px;color:#008000;letter-spacing:0.46px">00</span>
<span class="m" style="left:663px;top:1084px;color:#008000">.</span>
<span class="m" style="left:346px;top:1084px;color:#000000;letter-spacing:0.46px"><i>E</i>4</span>
<span class="m" style="left:673px;top:1084px;color:#000">ä</span>
<span class="m" style="left:376px;top:1084px;color:#800000;letter-spacing:0.46px"><i>F</i><i>F</i></span>
<span class="m" style="left:683px;top:1084px;color:#800000">ÿ</span>
<span class="m" style="left:406px;top:1084px;color:#000000;letter-spacing:0.46px">19</span>
<span class="m" style="left:693px;top:1084px;color:#000">.</span>
<span class="m" style="left:436px;top:1084px;color:#008000;letter-spacing:0.46px">00</span>
<span class="m" style="left:703px;top:1084px;color:#008000">.</span>
<span class="m" style="left:466px;top:1084px;color:#800080;letter-spacing:0.46px">70</span>
<span class="m" style="left:713px;top:1084px;color:#800080">p</span>
<span class="m" style="left:496px;top:1084px;color:#000000;letter-spacing:0.46px"><i>B</i>5</span>
<span class="m" style="left:723px;top:1084px;color:#000">µ</span>
<span class="m" style="left:526px;top:1084px;color:#000000;letter-spacing:0.46px"><i>A</i>6</span>
<span class="m" style="left:733px;top:1084px;color:#000">¦</span>
<span class="m" style="left:556px;top:1084px;color:#800080;letter-spacing:0.46px">77</span>
<span class="m" style="left:743px;top:1084px;color:#800080">w</span>
<div style="left:103px;top:1097px;width:124px;height:4px;background:#808080"></div>
<div style="left:103px;top:1097px;width:30px;height:4px;background:#000080"></div>
<div style="left:343px;top:1097px;width:124px;height:4px;background:#808080"></div>
<div style="left:343px;top:1097px;width:30px;height:4px;background:#000080"></div>
<div style="left:463px;top:1097px;width:124px;height:4px;background:#808080"></div>
<div style="left:463px;top:1097px;width:30px;height:4px;background:#ff0000"></div>
<span class="m" style="left:11px;top:1102px;color:#000">0019<i>F</i><i>F</i><i>D</i>4</span>
<span class="m" style="left:106px;top:1102px;color:#000000;letter-spacing:0.46px"><i>F</i><i>E</i></span>
<span class="m" style="left:593px;top:1102px;color:#000">þ</span>
<span class="m" style="left:136px;top:1102px;color:#000000;letter-spacing:0.46px"><i>A</i><i>B</i></span>
<span class="m" style="left:603px;top:1102px;color:#000">«</span>
<span class="m" style="left:166px;top:1102px;color:#000000;letter-spacing:0.46px">10</span>
<span class="m" style="left:613px;top:1102px;color:#000">.</span>
<span class="m" style="left:196px;top:1102px;color:#800080;letter-spacing:0.46px">40</span>
<span class="m" style="left:623px;top:1102px;color:#800080">@</span>
<span class="m" style="left:226px;top:1102px;color:#008000;letter-spacing:0.46px">00</span>
<span class="m" style="left:633px;top:1102px;color:#008000">.</span>
<span class="m" style="left:256px;top:1102px;color:#008000;letter-spacing:0.46px">00</span>
<span class="m" style="left:643px;top:1102px;color:#008000">.</span>
<span class="m" style="left:286px;top:1102px;color:#008000;letter-spacing:0.46px">00</span>
<span class="m" style="left:653px;top:1102px;color:#008000">.</span>
<span class="m" style="left:316px;top:1102px;color:#008000;letter-spacing:0.46px">00</span>
<span class="m" style="left:663px;top:1102px;color:#008000">.</span>
<span class="m" style="left:346px;top:1102px;color:#000000;letter-spacing:0.46px"><i>E</i><i>C</i></span>
<span class="m" style="left:673px;top:1102px;color:#000">ì</span>
<span class="m" style="left:376px;top:1102px;color:#800000;letter-spacing:0.46px"><i>F</i><i>F</i></span>
<span class="m" style="left:683px;top:1102px;color:#800000">ÿ</span>
<span class="m" style="left:406px;top:1102px;color:#000000;letter-spacing:0.46px">19</span>
<span class="m" style="left:693px;top:1102px;color:#000">.</span>
<span class="m" style="left:436px;top:1102px;color:#008000;letter-spacing:0.46px">00</span>
<span class="m" style="left:703px;top:1102px;color:#008000">.</span>
<span class="m" style="left:466px;top:1102px;color:#800080;letter-spacing:0.46px">7<i>E</i></span>
<span class="m" style="left:713px;top:1102px;color:#800080">~</span>
<span class="m" style="left:496px;top:1102px;color:#000000;letter-spacing:0.46px">82</span>
<span class="m" style="left:723px;top:1102px;color:#000">.</span>
<span class="m" style="left:526px;top:1102px;color:#000000;letter-spacing:0.46px"><i>A</i>5</span>
<span class="m" style="left:733px;top:1102px;color:#000">¥</span>
<span class="m" style="left:556px;top:1102px;color:#800080;letter-spacing:0.46px">77</span>
<span class="m" style="left:743px;top:1102px;color:#800080">w</span>
<div style="left:343px;top:1115px;width:124px;height:4px;background:#808080"></div>
<div style="left:343px;top:1115px;width:30px;height:4px;background:#000080"></div>
<div style="left:463px;top:1115px;width:124px;height:4px;background:#808080"></div>
<div style="left:463px;top:1115px;width:30px;height:4px;background:#ff0000"></div>
<span class="m" style="left:11px;top:1120px;color:#000">0019<i>F</i><i>F</i><i>E</i>4</span>
<span class="m" style="left:106px;top:1120px;color:#800000;letter-spacing:0.46px"><i>F</i><i>F</i></span>
<span class="m" style="left:593px;top:1120px;color:#800000">ÿ</span>
<span class="m" style="left:136px;top:1120px;color:#800000;letter-spacing:0.46px"><i>F</i><i>F</i></span>
<span class="m" style="left:603px;top:1120px;color:#800000">ÿ</span>
<span class="m" style="left:166px;top:1120px;color:#800000;letter-spacing:0.46px"><i>F</i><i>F</i></span>
<span class="m" style="left:613px;top:1120px;color:#800000">ÿ</span>
<span class="m" style="left:196px;top:1120px;color:#800000;letter-spacing:0.46px"><i>F</i><i>F</i></span>
<span class="m" style="left:623px;top:1120px;color:#800000">ÿ</span>
<span class="m" style="left:226px;top:1120px;color:#000000;letter-spacing:0.46px"><i>D</i>2</span>
<span class="m" style="left:633px;top:1120px;color:#000">Ò</span>
<span class="m" style="left:256px;top:1120px;color:#000000;letter-spacing:0.46px">93</span>
<span class="m" style="left:643px;top:1120px;color:#000">.</span>
<span class="m" style="left:286px;top:1120px;color:#000000;letter-spacing:0.46px"><i>A</i>7</span>
<span class="m" style="left:653px;top:1120px;color:#000">§</span>
<span class="m" style="left:316px;top:1120px;color:#800080;letter-spacing:0.46px">77</span>
<span class="m" style="left:663px;top:1120px;color:#800080">w</span>
<span class="m" style="left:346px;top:1120px;color:#008000;letter-spacing:0.46px">00</span>
<span class="m" style="left:673px;top:1120px;color:#008000">.</span>
<span class="m" style="left:376px;top:1120px;color:#008000;letter-spacing:0.46px">00</span>
<span class="m" style="left:683px;top:1120px;color:#008000">.</span>
<span class="m" style="left:406px;top:1120px;color:#008000;letter-spacing:0.46px">00</span>
<span class="m" style="left:693px;top:1120px;color:#008000">.</span>
<span class="m" style="left:436px;top:1120px;color:#008000;letter-spacing:0.46px">00</span>
<span class="m" style="left:703px;top:1120px;color:#008000">.</span>
<span class="m" style="left:466px;top:1120px;color:#008000;letter-spacing:0.46px">00</span>
<span class="m" style="left:713px;top:1120px;color:#008000">.</span>
<span class="m" style="left:496px;top:1120px;color:#008000;letter-spacing:0.46px">00</span>
<span class="m" style="left:723px;top:1120px;color:#008000">.</span>
<span class="m" style="left:526px;top:1120px;color:#008000;letter-spacing:0.46px">00</span>
<span class="m" style="left:733px;top:1120px;color:#008000">.</span>
<span class="m" style="left:556px;top:1120px;color:#008000;letter-spacing:0.46px">00</span>
<span class="m" style="left:743px;top:1120px;color:#008000">.</span>
<div style="left:223px;top:1133px;width:124px;height:4px;background:#808080"></div>
<div style="left:223px;top:1133px;width:30px;height:4px;background:#ff0000"></div>
<span class="m" style="left:11px;top:1138px;color:#ff0000">0019<i>F</i><i>F</i><i>F</i>4</span>
<span class="m" style="left:106px;top:1138px;color:#000000;letter-spacing:0.46px"><i>B</i>0</span>
<span class="m" style="left:593px;top:1138px;color:#000">°</span>
<span class="m" style="left:136px;top:1138px;color:#000000;letter-spacing:0.46px">8<i>C</i></span>
<span class="m" style="left:603px;top:1138px;color:#000">.</span>
<span class="m" style="left:166px;top:1138px;color:#800080;letter-spacing:0.46px">43</span>
<span class="m" style="left:613px;top:1138px;color:#800080">C</span>
<span class="m" style="left:196px;top:1138px;color:#008000;letter-spacing:0.46px">00</span>
<span class="m" style="left:623px;top:1138px;color:#008000">.</span>
<span class="m" style="left:226px;top:1138px;color:#008000;letter-spacing:0.46px">00</span>
<span class="m" style="left:633px;top:1138px;color:#008000">.</span>
<span class="m" style="left:256px;top:1138px;color:#000000;letter-spacing:0.46px"><i>A</i>0</span>
<span class="m" style="left:643px;top:1138px;color:#000"> </span>
<span class="m" style="left:286px;top:1138px;color:#800080;letter-spacing:0.46px">2<i>D</i></span>
<span class="m" style="left:653px;top:1138px;color:#800080">-</span>
<span class="m" style="left:316px;top:1138px;color:#008000;letter-spacing:0.46px">00</span>
<span class="m" style="left:663px;top:1138px;color:#008000">.</span>
<span class="m" style="left:346px;top:1138px;color:#008000;letter-spacing:0.46px">00</span>
<span class="m" style="left:673px;top:1138px;color:#008000">.</span>
<span class="m" style="left:376px;top:1138px;color:#008000;letter-spacing:0.46px">00</span>
<span class="m" style="left:683px;top:1138px;color:#008000">.</span>
<span class="m" style="left:406px;top:1138px;color:#008000;letter-spacing:0.46px">00</span>
<span class="m" style="left:693px;top:1138px;color:#008000">.</span>
<span class="m" style="left:436px;top:1138px;color:#008000;letter-spacing:0.46px">00</span>
<span class="m" style="left:703px;top:1138px;color:#008000">.</span>
<div style="left:103px;top:1151px;width:124px;height:4px;background:#808080"></div>
<div style="left:103px;top:1151px;width:30px;height:4px;background:#00ff00"></div>
<div style="left:223px;top:1151px;width:124px;height:4px;background:#808080"></div>
<div style="left:223px;top:1151px;width:30px;height:4px;background:#000080"></div>
<div style="left:219px;top:957px;width:3px;height:198px;background:#808080;"></div>
<div style="left:339px;top:957px;width:3px;height:198px;background:#808080;"></div>
<div style="left:459px;top:957px;width:3px;height:198px;background:#808080;"></div>
<div style="left:1024px;top:931px;width:25px;height:237px;background:#f0f0f0;"></div>
<div style="left:1025px;top:1115px;width:23px;height:25px;background:#cdcdcd;"></div>
<svg style="left:1028px;top:1148px" width="16" height="12" viewBox="0 0 16 12"><path d="M2 3 L8 9 L14 3" stroke="#555" stroke-width="2.6" fill="none"/></svg>
<div style="left:2px;top:1168px;width:1047px;height:25px;background:#f0f0f0;"></div>
<div style="left:29px;top:1169px;width:822px;height:23px;background:#cdcdcd;"></div>
<svg style="left:9px;top:1172px" width="12" height="16" viewBox="0 0 12 16"><path d="M9 2 L3 8 L9 14" stroke="#555" stroke-width="2.6" fill="none"/></svg>
<svg style="left:1002px;top:1172px" width="12" height="16" viewBox="0 0 12 16"><path d="M3 2 L9 8 L3 14" stroke="#555" stroke-width="2.6" fill="none"/></svg>
<div style="left:1053px;top:892px;width:683px;height:303px;background:#FFF8F0;border:1px solid #a0a0a0;"></div>
<div style="left:1691px;top:889px;width:45px;height:3px;background:#f0f0f0;"></div>
<div style="left:1054px;top:893px;width:656px;height:18px;background:#c0c0c0;"></div>
<span class="m" style="left:1063px;top:1072px;color:#808080;">0019<i>F</i><i>F</i>1<i>C</i></span>
<span class="m" style="left:1159px;top:1072px;color:#808080;">0019<i>F</i><i>F</i>30</span>
<span class="m" style="left:1063px;top:1090px;color:#808080;">0019<i>F</i><i>F</i>20</span>
<span class="m" style="left:1159px;top:1090px;color:#808080;">0019<i>F</i><i>F</i>34</span>
<span class="m" style="left:1063px;top:1108px;color:#808080;">0019<i>F</i><i>F</i>24</span>
<span class="m" style="left:1159px;top:1108px;color:#808080;">00000002</span>
<span class="m" style="left:1063px;top:1126px;color:#808080;">0019<i>F</i><i>F</i>28</span>
<span class="m" style="left:1159px;top:1126px;color:#808080;">0019<i>F</i><i>F</i>50</span>
<span class="m" style="left:1063px;top:1144px;color:#808080;">0019<i>F</i><i>F</i>2<i>C</i></span>
<span class="m" style="left:1159px;top:1144px;color:#808080;">00401000</span>
<span class="m" style="left:1259px;top:1144px;color:#808080;">consoleapplication2.00401000</span>
<span class="m" style="left:1063px;top:1162px;color:#808080;">0019<i>F</i><i>F</i>30</span>
<span class="m" style="left:1159px;top:1162px;color:#808080;">00400000</span>
<span class="m" style="left:1259px;top:1162px;color:#808080;">consoleapplication2.00400000</span>
<div style="left:1148px;top:1072px;width:2px;height:96px;background:#808080;"></div>
<div style="left:1248px;top:1072px;width:2px;height:96px;background:#808080;"></div>
<div style="left:1710px;top:893px;width:25px;height:275px;background:#f0f0f0;"></div>
<div style="left:1711px;top:1113px;width:24px;height:25px;background:#cdcdcd;"></div>
<svg style="left:1715px;top:902px" width="16" height="12" viewBox="0 0 16 12"><path d="M2 9 L8 3 L14 9" stroke="#555" stroke-width="2.6" fill="none"/></svg>
<svg style="left:1715px;top:1148px" width="16" height="12" viewBox="0 0 16 12"><path d="M2 3 L8 9 L14 3" stroke="#555" stroke-width="2.6" fill="none"/></svg>
<div style="left:1054px;top:1167px;width:682px;height:27px;background:#f0f0f0;"></div>
<div style="left:1081px;top:1168px;width:160px;height:24px;background:#cdcdcd;"></div>
<svg style="left:1062px;top:1172px" width="12" height="16" viewBox="0 0 12 16"><path d="M9 2 L3 8 L9 14" stroke="#555" stroke-width="2.6" fill="none"/></svg>
<svg style="left:1689px;top:1172px" width="12" height="16" viewBox="0 0 12 16"><path d="M3 2 L9 8 L3 14" stroke="#555" stroke-width="2.6" fill="none"/></svg>
<div style="left:1px;top:1195px;width:1735px;height:41px;background:#f0f0f0;"></div>
<span style="left:3px;top:1205px;font-size:18px;color:#000;">命令</span>
<span style="left:39px;top:1206px;font-size:17px;color:#000;font-family:'Liberation Mono',monospace;">:</span>
<div style="left:57px;top:1197px;width:1558px;height:38px;background:#fff;border:1px solid #8a8a8a;"></div>
<span style="left:63px;top:1206px;font-size:15.6px;color:#8c8c8c;">命令使用逗号分隔（像汇编语言）：</span>
<span class="m" style="left:318px;top:1206px;color:#8c8c8c;">mov eax, ebx</span>
<div style="left:1615px;top:1196px;width:120px;height:40px;background:#e5e5e5;border:1px solid #c8c8c8;"></div>
<span style="left:1624px;top:1206px;font-size:17px;color:#222;">默认</span>
<svg style="left:1713px;top:1211px" width="14" height="9" viewBox="0 0 14 9"><path d="M1 1L7 7L13 1" stroke="#333" stroke-width="1.3" fill="none"/></svg>
<div style="left:1px;top:1236px;width:1735px;height:39px;background:#c3c3c3;"></div>
<div style="left:5px;top:1243px;width:92px;height:28px;background:#ffff00;border:2px solid #a8a800;border-right-color:#f4f4a0;border-bottom-color:#f4f4a0;"></div>
<span style="left:26.5px;top:1246px;font-size:16.5px;color:#ff0000;">已暂停</span>
<span style="left:116px;top:1246px;font-size:16.5px;color:#000;">硬件断点</span>
<span style="left:207.5px;top:1247px;font-size:17px;color:#000;font-family:'Liberation Mono',monospace;transform:scaleX(0.882);transform-origin:0 0;">(dword,</span>
<span style="left:287.5px;top:1246px;font-size:16.5px;color:#000;">读写</span>
<span style="left:321px;top:1247px;font-size:17px;color:#000;font-family:'Liberation Mono',monospace;transform:scaleX(0.882);transform-origin:0 0;">)</span>
<span style="left:349.5px;top:1246px;font-size:16.5px;color:#000;">于</span>
<span style="left:385.5px;top:1247px;font-size:17px;color:#000;font-family:'Liberation Mono',monospace;transform:scaleX(0.882);transform-origin:0 0;">&lt;&amp;OptionalHeader.AddressOfEntryPoint&gt;</span>
<span style="left:737px;top:1247px;font-size:17px;color:#000;font-family:'Liberation Mono',monospace;transform:scaleX(0.882);transform-origin:0 0;">(</span>
<span style="left:745px;top:1247px;font-size:17px;color:#000;font-family:'Liberation Mono',monospace;transform:scaleX(0.882);transform-origin:0 0;color:#0000ff;text-decoration:underline;">0019FF54</span>
<span style="left:817px;top:1247px;font-size:17px;color:#000;font-family:'Liberation Mono',monospace;transform:scaleX(0.882);transform-origin:0 0;">)!</span>
<div style="left:109px;top:1243px;width:1392px;height:28px;border:2px solid #8c8c8c;border-right-color:#e8e8e8;border-bottom-color:#e8e8e8;"></div>
<div style="left:1514px;top:1243px;width:222px;height:27px;border:2px solid #8c8c8c;border-right-color:#e8e8e8;border-bottom-color:#e8e8e8;"></div>
<span style="left:1522px;top:1248px;font-size:16.5px;color:#000;">已调试时间</span>
<span style="left:1608px;top:1249px;font-size:17px;color:#000;font-family:'Liberation Mono',monospace;transform:scaleX(0.882);transform-origin:0 0;">:</span>
<span style="left:1637px;top:1249px;font-size:17px;color:#000;font-family:'Liberation Mono',monospace;transform:scaleX(0.882);transform-origin:0 0;">0:01:00:34</span>
<div style="left:812px;top:132px;width:880px;height:941px;box-shadow:0 3px 16px 3px rgba(0,0,0,0.30);"></div>
<div style="left:812px;top:132px;width:880px;height:941px;background:#f0f0f0;border:1px solid #6a6a6a;"></div>
<div style="left:813px;top:133px;width:878px;height:72px;background:#fff;"></div>
<svg style="left:824px;top:142px" width="24" height="24" viewBox="0 0 24 24"><defs><linearGradient id="sg" x1="0" y1="0" x2="0" y2="1"><stop offset="0" stop-color="#5a5a5a"/><stop offset="1" stop-color="#0a0a0a"/></linearGradient><linearGradient id="sr" x1="0" y1="0" x2="1" y2="1"><stop offset="0" stop-color="#e8a0a0"/><stop offset="1" stop-color="#d02020"/></linearGradient></defs><rect x="0" y="0" width="24" height="24" rx="2" fill="url(#sg)"/><text x="12" y="21" font-family="Liberation Serif" font-weight="bold" font-size="22" fill="url(#sr)" stroke="#111" stroke-width="0.6" text-anchor="middle">S</text></svg>
<span style="left:853.00px;top:145px;font-family:'Liberation Sans',sans-serif;font-size:19px;color:#000;transform:scaleX(0.9678);transform-origin:0 0;">Scylla x86 v0.9.8</span>
<div style="left:1509px;top:154px;width:15px;height:1px;background:#111;"></div>
<div style="left:1578px;top:147px;width:15px;height:15px;border:1px solid #c8c8c8;"></div>
<svg style="left:1648px;top:146px" width="17" height="17" viewBox="0 0 17 17"><path d="M1 1L16 16M16 1L1 16" stroke="#111" stroke-width="1.3"/></svg>
<span style="left:820.70px;top:182px;font-family:'Liberation Sans',sans-serif;font-size:19px;color:#000;transform:scaleX(0.9306);transform-origin:0 0;">File</span>
<span style="left:864.20px;top:182px;font-family:'Liberation Sans',sans-serif;font-size:19px;color:#000;transform:scaleX(1.0509);transform-origin:0 0;">Imports</span>
<span style="left:945.50px;top:182px;font-family:'Liberation Sans',sans-serif;font-size:19px;color:#000;transform:scaleX(0.9358);transform-origin:0 0;">Trace</span>
<span style="left:1006.00px;top:182px;font-family:'Liberation Sans',sans-serif;font-size:19px;color:#000;transform:scaleX(0.9923);transform-origin:0 0;">Misc</span>
<span style="left:1059.50px;top:182px;font-family:'Liberation Sans',sans-serif;font-size:19px;color:#000;transform:scaleX(1.0096);transform-origin:0 0;">Help</span>
<div style="left:829px;top:233px;width:846px;height:71px;border:1px solid #dcdcdc;"></div>
<div style="left:1154px;top:231px;width:197px;height:5px;background:#f0f0f0;"></div>
<span style="left:1158.70px;top:227px;font-family:'Liberation Sans',sans-serif;font-size:16px;color:#000;transform:scaleX(0.9785);transform-origin:0 0;">Attach to an active process</span>
<div style="left:842px;top:252px;width:720px;height:27px;background:#e5e5e5;border:1px solid #adadad;"></div>
<div style="left:843px;top:253px;width:691px;height:25px;overflow:hidden;">
<span style="left:3.00px;top:5px;font-family:'Liberation Sans',sans-serif;font-size:16.5px;color:#000;transform:scaleX(0.9631);transform-origin:0 0;">22728 - ConsoleApplication2.exe - D:\CTFProblem\BugkuCTF\Reverse\Mountain climbing\Consol</span>
</div>
<svg style="left:1541px;top:261px" width="14" height="9" viewBox="0 0 14 9"><path d="M1 1L7 7L13 1" stroke="#444" stroke-width="1.2" fill="none"/></svg>
<div style="left:1575px;top:251px;width:84px;height:34px;background:#e1e1e1;border:1px solid #adadad;"></div>
<span style="left:1587.30px;top:261px;font-family:'Liberation Sans',sans-serif;font-size:16px;color:#000;transform:scaleX(0.9219);transform-origin:0 0;">Pick DLL</span>
<div style="left:829px;top:321px;width:846px;height:349px;border:1px solid #dcdcdc;"></div>
<div style="left:1221px;top:319px;width:63px;height:5px;background:#f0f0f0;"></div>
<span style="left:1225.00px;top:315px;font-family:'Liberation Sans',sans-serif;font-size:16px;color:#000;transform:scaleX(1.0379);transform-origin:0 0;">Imports</span>
<div style="left:845px;top:338px;width:815px;height:278px;background:#fff;border:1px solid #828790;"></div>
<span style="left:890.00px;top:344px;font-family:'Liberation Sans',sans-serif;font-size:16px;color:#000;transform:scaleX(1.0178);transform-origin:0 0;">kernel32.dll (24) FThunk: 00032000</span>
<span style="left:890.00px;top:365px;font-family:'Liberation Sans',sans-serif;font-size:16px;color:#000;transform:scaleX(1.0176);transform-origin:0 0;">vcruntime140d.dll (6) FThunk: 0003209C</span>
<span style="left:890.00px;top:387px;font-family:'Liberation Sans',sans-serif;font-size:16px;color:#000;transform:scaleX(1.0033);transform-origin:0 0;">ucrtbased.dll (40) FThunk: 000320E4</span>
<svg style="left:845px;top:338px" width="100" height="80" viewBox="0 0 100 80"><defs><linearGradient id="tg" x1="0" y1="0" x2="0" y2="1"><stop offset="0.5" stop-color="#fbfbfb"/><stop offset="0.5" stop-color="#e4e4e4"/></linearGradient></defs><rect x="7.6" y="8.700000000000001" width="11.6" height="11.6" rx="1.5" fill="url(#tg)" stroke="#8a8a8a" stroke-width="1.2"/><path d="M9.3 14.3h8.2M13.4 10.200000000000001v8.2" stroke="#2c4a94" stroke-width="1.2"/><path d="M21 14.3h4" stroke="#777" stroke-width="1" stroke-dasharray="1 1.2"/><path d="M28.5 13.8 l3.5 3.8 l5.8 -6.8" stroke="#3f9a3f" stroke-width="3.2" fill="none" stroke-linecap="round"/><path d="M28.5 13.8 l3.5 3.8 l5.8 -6.8" stroke="#6cc46c" stroke-width="1.6" fill="none" stroke-linecap="round"/><rect x="7.6" y="30.699999999999996" width="11.6" height="11.6" rx="1.5" fill="url(#tg)" stroke="#8a8a8a" stroke-width="1.2"/><path d="M9.3 36.3h8.2M13.4 32.199999999999996v8.2" stroke="#2c4a94" stroke-width="1.2"/><path d="M21 36.3h4" stroke="#777" stroke-width="1" stroke-dasharray="1 1.2"/><path d="M28.5 35.8 l3.5 3.8 l5.8 -6.8" stroke="#3f9a3f" stroke-width="3.2" fill="none" stroke-linecap="round"/><path d="M28.5 35.8 l3.5 3.8 l5.8 -6.8" stroke="#6cc46c" stroke-width="1.6" fill="none" stroke-linecap="round"/><rect x="7.6" y="52.699999999999996" width="11.6" height="11.6" rx="1.5" fill="url(#tg)" stroke="#8a8a8a" stroke-width="1.2"/><path d="M9.3 58.3h8.2M13.4 54.199999999999996v8.2" stroke="#2c4a94" stroke-width="1.2"/><path d="M21 58.3h4" stroke="#777" stroke-width="1" stroke-dasharray="1 1.2"/><path d="M28.5 57.8 l3.5 3.8 l5.8 -6.8" stroke="#3f9a3f" stroke-width="3.2" fill="none" stroke-linecap="round"/><path d="M28.5 57.8 l3.5 3.8 l5.8 -6.8" stroke="#6cc46c" stroke-width="1.6" fill="none" stroke-linecap="round"/><path d="M13.4 21.3 V30.299999999999997" stroke="#666" stroke-width="1.2" stroke-dasharray="1.2 1.6"/><path d="M13.4 43.3 V52.3" stroke="#666" stroke-width="1.2" stroke-dasharray="1.2 1.6"/></svg>
<div style="left:846px;top:624px;width:129px;height:31px;background:#e1e1e1;border:1px solid #adadad;"></div>
<span style="left:864.00px;top:633px;font-family:'Liberation Sans',sans-serif;font-size:16px;color:#000;transform:scaleX(1.0138);transform-origin:0 0;">Show Invalid</span>
<div style="left:987px;top:624px;width:129px;height:31px;background:#e1e1e1;border:1px solid #adadad;"></div>
<span style="left:1002.00px;top:633px;font-family:'Liberation Sans',sans-serif;font-size:16px;color:#000;transform:scaleX(0.9584);transform-origin:0 0;">Show Suspect</span>
<div style="left:1563px;top:624px;width:93px;height:31px;background:#e1e1e1;border:1px solid #adadad;"></div>
<span style="left:1591.30px;top:633px;font-family:'Liberation Sans',sans-serif;font-size:16px;color:#000;transform:scaleX(0.9255);transform-origin:0 0;">Clear</span>
<div style="left:829px;top:692px;width:419px;height:136px;border:1px solid #dcdcdc;"></div>
<div style="left:1005px;top:690px;width:69px;height:5px;background:#f0f0f0;"></div>
<span style="left:1009.00px;top:685px;font-family:'Liberation Sans',sans-serif;font-size:16px;color:#000;transform:scaleX(1.1119);transform-origin:0 0;">IAT Info</span>
<span style="left:842.40px;top:721px;font-family:'Liberation Sans',sans-serif;font-size:16px;color:#000;transform:scaleX(0.8711);transform-origin:0 0;">OEP</span>
<span style="left:842.40px;top:757px;font-family:'Liberation Sans',sans-serif;font-size:16px;color:#000;transform:scaleX(0.9877);transform-origin:0 0;">VA</span>
<span style="left:842.40px;top:792px;font-family:'Liberation Sans',sans-serif;font-size:16px;color:#000;transform:scaleX(0.8771);transform-origin:0 0;">Size</span>
<div style="left:887px;top:713px;width:191px;height:29px;background:#fff;border:1px solid #7a7a7a;"></div>
<span style="left:891.60px;top:719px;font-family:'Liberation Sans',sans-serif;font-size:16px;color:#000;transform:scaleX(1.0143);transform-origin:0 0;">00411046</span>
<div style="left:887px;top:749px;width:191px;height:29px;background:#fff;border:1px solid #7a7a7a;"></div>
<span style="left:891.60px;top:755px;font-family:'Liberation Sans',sans-serif;font-size:16px;color:#000;transform:scaleX(0.9965);transform-origin:0 0;">00432000</span>
<div style="left:887px;top:784px;width:191px;height:29px;background:#fff;border:1px solid #7a7a7a;"></div>
<span style="left:891.60px;top:790px;font-family:'Liberation Sans',sans-serif;font-size:16px;color:#000;transform:scaleX(0.9965);transform-origin:0 0;">00000184</span>
<div style="left:1098px;top:719px;width:133px;height:36px;background:#e1e1e1;border:1px solid #adadad;"></div>
<span style="left:1109.00px;top:730px;font-family:'Liberation Sans',sans-serif;font-size:16px;color:#000;transform:scaleX(1.0197);transform-origin:0 0;">IAT Autosearch</span>
<div style="left:1098px;top:766px;width:133px;height:36px;background:#e1e1e1;border:2px solid #0078d7;"></div>
<span style="left:1122.30px;top:777px;font-family:'Liberation Sans',sans-serif;font-size:16px;color:#000;transform:scaleX(1.0045);transform-origin:0 0;">Get Imports</span>
<div style="left:1263px;top:692px;width:158px;height:136px;border:1px solid #dcdcdc;"></div>
<div style="left:1314px;top:690px;width:58px;height:5px;background:#f0f0f0;"></div>
<span style="left:1317.80px;top:685px;font-family:'Liberation Sans',sans-serif;font-size:16px;color:#000;transform:scaleX(0.9562);transform-origin:0 0;">Actions</span>
<div style="left:1278px;top:716px;width:126px;height:31px;background:#cccccc;border:1px solid #bfbfbf;"></div>
<span style="left:1308.00px;top:724px;font-family:'Liberation Sans',sans-serif;font-size:16px;color:#838383;transform:scaleX(0.9781);transform-origin:0 0;">Autotrace</span>
<div style="left:1436px;top:692px;width:239px;height:136px;border:1px solid #dcdcdc;"></div>
<div style="left:1531px;top:690px;width:51px;height:5px;background:#f0f0f0;"></div>
<span style="left:1535.30px;top:685px;font-family:'Liberation Sans',sans-serif;font-size:16px;color:#000;transform:scaleX(0.9853);transform-origin:0 0;">Dump</span>
<div style="left:1460px;top:721px;width:75px;height:34px;background:#e1e1e1;border:1px solid #adadad;"></div>
<span style="left:1476.60px;top:731px;font-family:'Liberation Sans',sans-serif;font-size:16px;color:#000;transform:scaleX(0.9853);transform-origin:0 0;">Dump</span>
<div style="left:1550px;top:721px;width:108px;height:34px;background:#e1e1e1;border:1px solid #adadad;"></div>
<span style="left:1566.30px;top:731px;font-family:'Liberation Sans',sans-serif;font-size:16px;color:#000;transform:scaleX(0.9450);transform-origin:0 0;">PE Rebuild</span>
<div style="left:1460px;top:769px;width:198px;height:36px;background:#e1e1e1;border:1px solid #adadad;"></div>
<span style="left:1525.30px;top:780px;font-family:'Liberation Sans',sans-serif;font-size:16px;color:#000;transform:scaleX(0.9825);transform-origin:0 0;">Fix Dump</span>
<div style="left:829px;top:851px;width:846px;height:170px;border:1px solid #dcdcdc;"></div>
<div style="left:1236px;top:849px;width:36px;height:5px;background:#f0f0f0;"></div>
<span style="left:1240.00px;top:845px;font-family:'Liberation Sans',sans-serif;font-size:16px;color:#000;transform:scaleX(1.0093);transform-origin:0 0;">Log</span>
<div style="left:845px;top:872px;width:815px;height:133px;background:#fff;border:1px solid #828790;"></div>
<div style="left:847px;top:969px;width:785px;height:19px;background:#0078d7;"></div>
<span style="left:849.30px;top:877px;font-family:'Liberation Sans',sans-serif;font-size:15.5px;color:#000;transform:scaleX(1.0538);transform-origin:0 0;">IAT Search Adv: Found 70 (0x46) possible IAT entries.</span>
<span style="left:849.30px;top:895px;font-family:'Liberation Sans',sans-serif;font-size:15.5px;color:#000;transform:scaleX(1.0561);transform-origin:0 0;">IAT Search Adv: Possible IAT first 00432000 last 00432180 entry.</span>
<span style="left:849.30px;top:915px;font-family:'Liberation Sans',sans-serif;font-size:15.5px;color:#000;transform:scaleX(1.0617);transform-origin:0 0;">IAT Search Adv: IAT VA 00432000 RVA 00032000 Size 0x0184 (388)</span>
<span style="left:849.30px;top:934px;font-family:'Liberation Sans',sans-serif;font-size:15.5px;color:#000;transform:scaleX(1.0371);transform-origin:0 0;">IAT Search Nor: IAT VA 00431FFC RVA 00031FFC Size 0x0064 (100)</span>
<span style="left:849.30px;top:953px;font-family:'Liberation Sans',sans-serif;font-size:15.5px;color:#000;transform:scaleX(1.0530);transform-origin:0 0;">IAT parsing finished, found 70 valid APIs, missed 0 APIs</span>
<span style="left:849.30px;top:972px;font-family:'Liberation Sans',sans-serif;font-size:15.5px;color:#fff;transform:scaleX(1.0282);transform-origin:0 0;">DIRECT IMPORTS - Found 0 possible direct imports with 0 unique APIs!</span>
<div style="left:1633px;top:873px;width:26px;height:131px;background:#f0f0f0;"></div>
<div style="left:1634px;top:944px;width:24px;height:32px;background:#cdcdcd;"></div>
<svg style="left:1638px;top:882px" width="16" height="12" viewBox="0 0 16 12"><path d="M2 9 L8 3 L14 9" stroke="#606060" stroke-width="2.6" fill="none"/></svg>
<svg style="left:1638px;top:984px" width="16" height="12" viewBox="0 0 16 12"><path d="M2 3 L8 9 L14 3" stroke="#606060" stroke-width="2.6" fill="none"/></svg>
<div style="left:813px;top:1038px;width:878px;height:1px;background:#d7d7d7;"></div>
<div style="left:987px;top:1040px;width:1px;height:32px;background:#d7d7d7;"></div>
<div style="left:1162px;top:1040px;width:1px;height:32px;background:#d7d7d7;"></div>
<div style="left:1454px;top:1040px;width:1px;height:32px;background:#d7d7d7;"></div>
<span style="left:851.20px;top:1048px;font-family:'Liberation Sans',sans-serif;font-size:18.5px;color:#000;transform:scaleX(1.0486);transform-origin:0 0;">Imports: 70</span>
<svg style="left:1030px;top:1050px" width="12" height="12" viewBox="0 0 12 12"><path d="M1.5 6.5 l3 3 l5.5 -6.5" stroke="#3f9a3f" stroke-width="2.6" fill="none" stroke-linecap="round"/><path d="M1.5 6.5 l3 3 l5.5 -6.5" stroke="#6cc46c" stroke-width="1.2" fill="none" stroke-linecap="round"/></svg>
<span style="left:1048.80px;top:1048px;font-family:'Liberation Sans',sans-serif;font-size:18.5px;color:#000;transform:scaleX(1.0162);transform-origin:0 0;">Invalid: 0</span>
<span style="left:1214.40px;top:1048px;font-family:'Liberation Sans',sans-serif;font-size:18.5px;color:#000;transform:scaleX(1.0308);transform-origin:0 0;">Imagebase: 00400000</span>
<div style="left:1455px;top:1040px;width:211px;height:30px;overflow:hidden;">
<span style="left:4.50px;top:8px;font-family:'Liberation Sans',sans-serif;font-size:18.5px;color:#000;transform:scaleX(1.0510);transform-origin:0 0;">ConsoleApplication2.exe</span>
</div>
<svg style="left:1678px;top:1058px" width="10" height="10" viewBox="0 0 10 10"><rect x="8" y="0" width="2" height="2" fill="#b0b0b0"/><rect x="8" y="4" width="2" height="2" fill="#b0b0b0"/><rect x="4" y="4" width="2" height="2" fill="#b0b0b0"/><rect x="8" y="8" width="2" height="2" fill="#b0b0b0"/><rect x="4" y="8" width="2" height="2" fill="#b0b0b0"/><rect x="0" y="8" width="2" height="2" fill="#b0b0b0"/></svg>
</body></html>
